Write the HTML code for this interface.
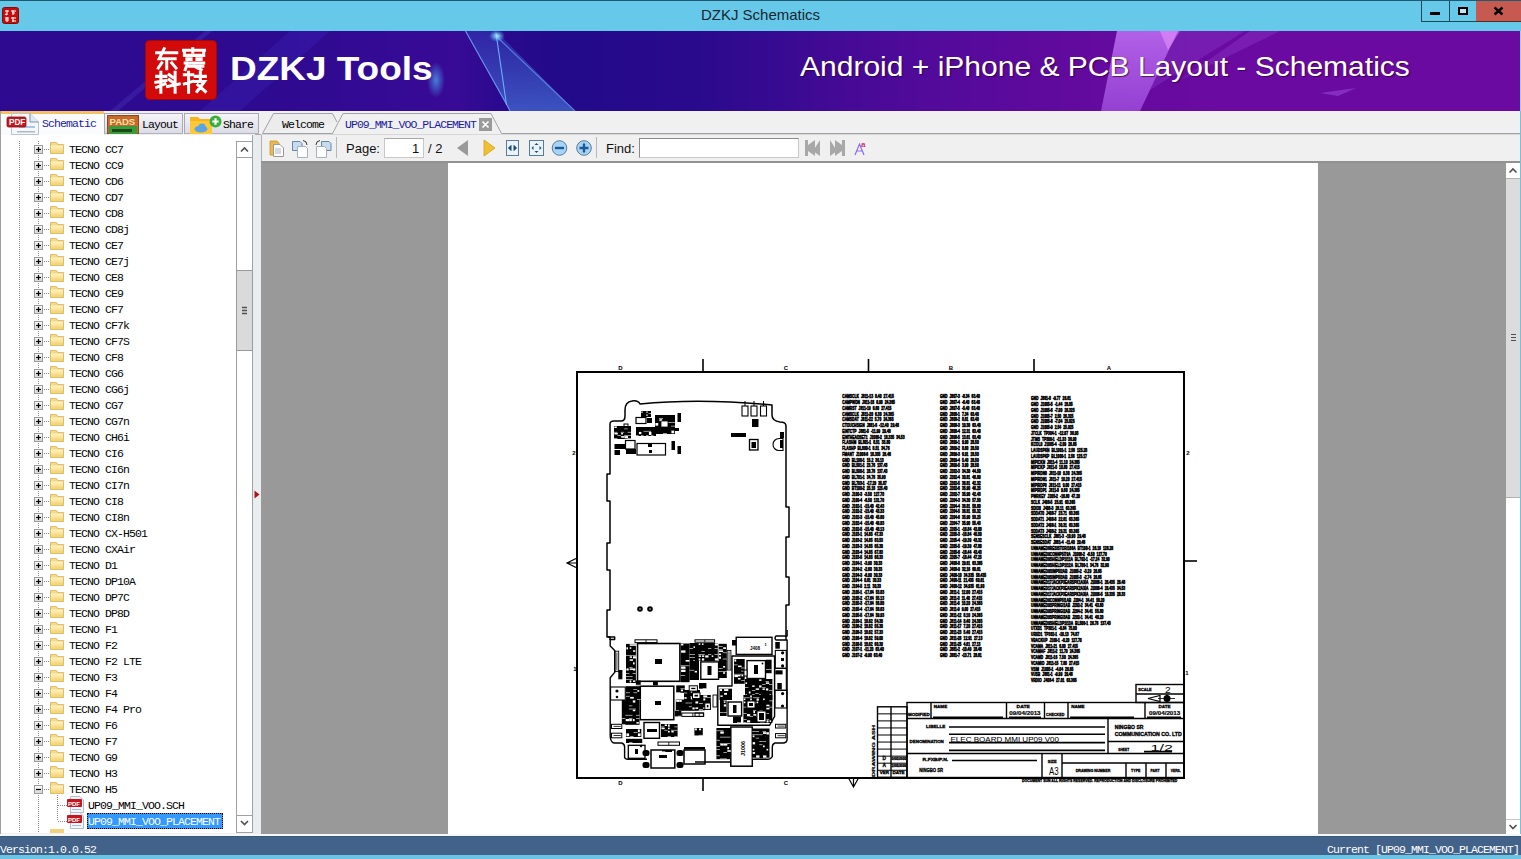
<!DOCTYPE html>
<html><head><meta charset="utf-8">
<style>
*{margin:0;padding:0;box-sizing:border-box}
html,body{width:1521px;height:859px;overflow:hidden;background:#f0f0f0;font-family:"Liberation Sans",sans-serif}
.a{position:absolute}
.mono{font-family:"Liberation Mono",monospace}
svg{position:absolute;overflow:visible}
</style></head><body>

<div class="a" style="left:0;top:0;width:1521px;height:31px;background:#66c9ea"></div>
<div class="a" style="left:0;top:0;width:1521px;height:1px;background:#1f5a70"></div>
<div class="a" id="ttl" style="left:0;top:6px;width:1521px;text-align:center;font-size:15px;color:#1a2630;line-height:18px">DZKJ Schematics</div>
<svg style="left:2px;top:7px" width="17" height="17" viewBox="0 0 17 17">
<rect x="0.5" y="0.5" width="16" height="16" rx="2" fill="#c40d0d" stroke="#8a0a0a"/>
<path d="M3 4h4M5 3v5M3 7l2 1M9 4h5M11 3v5M10 6h3M3 11h4M5 10v5M3 13h4M9 11h5M11 10v5M10 14h4" stroke="#fff" stroke-width="1.1" fill="none"/>
</svg>
<div class="a" style="left:1421px;top:1px;width:28px;height:21px;border:1px solid #1d4657;border-top:none;border-right:none"></div>
<div class="a" style="left:1449px;top:1px;width:27px;height:21px;border:1px solid #1d4657;border-top:none;border-right:none"></div>
<div class="a" style="left:1476px;top:1px;width:45px;height:21px;background:#c75a50;border-bottom:1px solid #5a2a22"></div>
<div class="a" style="left:1430px;top:12px;width:10px;height:3px;background:#000"></div>
<div class="a" style="left:1458px;top:7px;width:10px;height:8px;border:2px solid #000;background:#bfe6f3"></div>
<svg style="left:1493px;top:6px" width="11" height="10" viewBox="0 0 11 10"><path d="M1.5 1.5L9.5 8.5M9.5 1.5L1.5 8.5" stroke="#000" stroke-width="2.4"/></svg>
<div class="a" style="left:0;top:31px;width:1520px;height:80px;overflow:hidden;background:linear-gradient(90deg,#2e0a90 0%,#2e0a90 18%,#340a94 25%,#380a96 30%,#2a0a8e 33%,#220a8a 37%,#2a0a8c 46%,#360a92 50.7%,#460a96 56%,#520a9a 61%,#5a0a9c 66%,#640a9e 72%,#6a0aa0 80%,#6a0aa0 100%)">
<svg style="left:0;top:0" width="1520" height="80" viewBox="0 31 1520 80">
<defs>
<linearGradient id="gb" x1="0" y1="0" x2="0" y2="1"><stop offset="0" stop-color="#3040b8" stop-opacity="0.5"/><stop offset="1" stop-color="#4a80e0" stop-opacity="0.62"/></linearGradient>
<linearGradient id="gp" x1="0" y1="0" x2="0" y2="1"><stop offset="0" stop-color="#c070f4" stop-opacity="0.85"/><stop offset="1" stop-color="#a858e8" stop-opacity="0.7"/></linearGradient>
<radialGradient id="gl"><stop offset="0" stop-color="#4a9ae8" stop-opacity="0.8"/><stop offset="1" stop-color="#4a9ae8" stop-opacity="0"/></radialGradient>
<radialGradient id="gl2"><stop offset="0" stop-color="#a0f0ff" stop-opacity="1"/><stop offset="1" stop-color="#60c0ff" stop-opacity="0"/></radialGradient>
</defs>
<path d="M110 111L205 31H212L118 111Z" fill="#4a3ac0" opacity="0.35"/>
<path d="M200 111L290 31H330L240 111Z" fill="#3a2ac0" opacity="0.3"/>
<path d="M465.5 31H496L575 111H510Z" fill="url(#gb)"/>
<path d="M465.5 31L507.5 106L510 111" fill="none" stroke="#6a98f0" stroke-width="1.1"/>
<path d="M496 33L506.5 105" fill="none" stroke="#70b0f8" stroke-width="1.1"/>
<path d="M496 36L575 111" fill="none" stroke="#5a80e0" stroke-width="1.1"/>
<ellipse cx="497" cy="36" rx="8" ry="6" fill="url(#gl2)"/>
<ellipse cx="436" cy="80" rx="9" ry="18" fill="url(#gl)"/>
<path d="M1117 31H1178L1140 111H1101Z" fill="url(#gp)"/>
<path d="M1160 31H1180L1168 50Z" fill="#e890ff" opacity="0.6"/>
<path d="M1178 31H1245L1150 90L1140 111Z" fill="#9040d0" opacity="0.35"/>
<path d="M1250 31H1280L1180 80Z" fill="#9a4ad8" opacity="0.3"/>
<path d="M1320 93L1356 88L1338 96Z" fill="#a050e0" opacity="0.5"/>
</svg>
</div>
<div class="a" style="left:1520px;top:31px;width:1px;height:80px;background:#8fd6f0"></div>
<svg style="left:145px;top:40px" width="72" height="60" viewBox="0 0 72 60">
<rect x="0.5" y="0.5" width="71" height="59" rx="4" fill="#d20a0a" stroke="#a00808"/>
<g stroke="#fff" stroke-width="3.6" fill="none" stroke-linecap="square" transform="translate(36,30.5) scale(0.84) translate(-36,-31)">
<path d="M7 10H31M16 5L10 17H29M19 17V29M13 22L9 28M25 22L30 28"/>
<path d="M39 7H64M50 5V9M40 10V13H63V10M43 14H48M55 14H60M43 18H48M55 18H60M41 22H63M44 22L41 30M46 26H62M52 26L60 30"/>
<path d="M7 38H18M12 33V57M6 45L18 43M7 51L17 47M22 36L26 39M22 42L26 45M20 50L34 47M29 33V57"/>
<path d="M40 36H50M45 33V57M40 47L50 44M53 38H65M59 33V42M53 44H64L55 56M56 48L65 56"/>
</g></svg>
<div class="a" id="dzkj" style="left:229.5px;top:48px;transform:scaleX(1.087);font-size:34px;font-weight:bold;color:#fff;line-height:40px;white-space:nowrap;transform-origin:0 0">DZKJ Tools</div>
<div class="a" id="andr" style="left:800px;top:50px;transform:scaleX(1.0915);font-size:27.5px;color:#fff;line-height:34px;white-space:nowrap;transform-origin:0 0;text-shadow:1px 1px 1px rgba(40,0,60,0.7)">Android + iPhone &amp; PCB Layout - Schematics</div>
<div class="a" style="left:0;top:111px;width:1521px;height:725px;background:#f0f0f0"></div>
<div class="a" style="left:0;top:111px;width:1px;height:725px;background:#a0a0a0"></div>
<div class="a" style="left:1520px;top:111px;width:1px;height:725px;background:#b8d8e8"></div>
<div class="a" style="left:1px;top:111px;width:103px;height:24px;background:#fafbfd;border-top:3px solid #f5c15e"></div>
<div class="a" style="left:104px;top:113px;width:79px;height:21px;background:linear-gradient(#f4f4f8,#dcdce6);border:1px solid #a8a8b8;border-bottom-color:#b0b0c0"></div>
<div class="a" style="left:184px;top:113px;width:75px;height:21px;background:linear-gradient(#f4f4f8,#dcdce6);border:1px solid #a8a8b8;border-bottom-color:#b0b0c0"></div>
<svg style="left:6px;top:113px" width="34" height="22" viewBox="0 0 34 22">
<path d="M5.5 0.5H24L32.5 9V21.5H5.5Z" fill="#f4f8fc" stroke="#b8c4d0"/>
<path d="M24 0.5V9H32.5" fill="#e0e8f0" stroke="#8090a0"/>
<rect x="13" y="13" width="16" height="2" fill="#a8c8e8"/><rect x="11" y="18" width="18" height="1.5" fill="#b0b8c8"/>
<rect x="1" y="4" width="19" height="10" rx="1.5" fill="#c8141c" stroke="#901010" stroke-width="0.8"/>
<text x="3" y="12.3" font-family="Liberation Sans" font-weight="bold" font-size="8.2" fill="#fff">PDF</text>
</svg>
<div class="a mono" style="left:42px;top:116.5px;font-size:11.5px;letter-spacing:-0.9px;color:#1a1aa0;line-height:14px;white-space:pre">Schematic</div>
<svg style="left:107px;top:115px" width="32" height="19" viewBox="0 0 32 19">
<rect x="0.5" y="0.5" width="31" height="18" fill="#c8682a" stroke="#8a4a20"/>
<rect x="2" y="11" width="28" height="8" fill="#3a9a3a"/>
<rect x="5" y="14" width="20" height="3" fill="#1a4a1a"/>
<text x="2.5" y="10" font-family="Liberation Sans" font-weight="bold" font-size="9.5" fill="#fbe6a8">PADS</text>
</svg>
<div class="a mono" style="left:142px;top:118px;font-size:11.5px;letter-spacing:-0.9px;color:#000;line-height:14px;white-space:pre">Layout</div>
<svg style="left:189px;top:114px" width="34" height="20" viewBox="0 0 34 20">
<path d="M1 3H9L11 5H23V20H1Z" fill="#f8b418"/>
<path d="M1 7H23V20H1Z" fill="#fcc83a"/>
<ellipse cx="12" cy="15" rx="6.5" ry="3.5" fill="#5aa4e4"/><ellipse cx="13" cy="12.5" rx="3.5" ry="3" fill="#5aa4e4"/>
<circle cx="26.5" cy="7.5" r="6" fill="#3aae3a"/>
<path d="M26.5 4.3V10.7M23.3 7.5H29.7" stroke="#fff" stroke-width="2.2"/>
</svg>
<div class="a mono" style="left:223px;top:118px;font-size:11.5px;letter-spacing:-0.9px;color:#000;line-height:14px;white-space:pre">Share</div>
<svg style="left:255px;top:110px" width="1266" height="26" viewBox="0 0 1266 26">
<path d="M0 24.5H1266" stroke="#a8a8a8"/>
<path d="M7.5 23.5L18.5 3.5H77.5L82 12" fill="#ececec" stroke="#a0a4a8"/>
<path d="M7.5 23.5H80" stroke="#a0a4a8"/>
<path d="M77 24.5L88 3.5H236L246.5 23.5H1266" fill="#f0f0f0" stroke="#a0a4a8"/>
</svg>
<div class="a mono" style="left:282px;top:118px;font-size:11.5px;letter-spacing:-0.9px;color:#000;line-height:14px;white-space:pre">Welcome</div>
<div class="a mono" style="left:345px;top:118px;font-size:11.5px;letter-spacing:-0.95px;color:#1a1aa0;line-height:14px;white-space:pre">UP09_MMI_VOO_PLACEMENT</div>
<svg style="left:479px;top:118px" width="13" height="13" viewBox="0 0 13 13"><rect width="13" height="13" fill="#9a9a9a"/><path d="M3.5 3.5L9.5 9.5M9.5 3.5L3.5 9.5" stroke="#fff" stroke-width="1.7"/></svg>
<div class="a" style="left:1px;top:135px;width:252px;height:698px;background:#fff"></div>
<div class="a" style="left:252px;top:135px;width:1px;height:698px;background:#a0a0a0"></div>
<div class="a" style="left:253px;top:135px;width:8px;height:700px;background:#e9edf0"></div>
<svg style="left:0;top:135px" width="236" height="698" viewBox="0 135 236 698">
<defs><linearGradient id="bxg" x1="0" y1="0" x2="0" y2="1"><stop offset="0" stop-color="#fafafa"/><stop offset="1" stop-color="#d8d8d8"/></linearGradient><linearGradient id="fdg" x1="0" y1="0" x2="0" y2="1"><stop offset="0" stop-color="#f6dc90"/><stop offset="1" stop-color="#eec060"/></linearGradient><linearGradient id="ffg" x1="0" y1="0" x2="0" y2="1"><stop offset="0" stop-color="#fff4c4"/><stop offset="1" stop-color="#f4d070"/></linearGradient></defs>
<path d="M19.5 141V833M38.5 141V833" stroke="#8a8a8a" stroke-dasharray="1 1"/>
<path d="M44 149.5H50" stroke="#8a8a8a" stroke-dasharray="1 1"/>
<rect x="34.5" y="145.5" width="8" height="8" fill="url(#bxg)" stroke="#9a9a9a"/>
<path d="M36 149.5H41" stroke="#000" stroke-width="1.2"/>
<path d="M38.5 147V152" stroke="#000" stroke-width="1.2"/>
<path d="M50.5 142.5H56.5l1.5 2H63.5V153.5H50.5Z" fill="url(#fdg)" stroke="#dcb860" stroke-width="0.9"/>
<path d="M51 145.5H63V153H51Z" fill="url(#ffg)"/>
<path d="M44 165.5H50" stroke="#8a8a8a" stroke-dasharray="1 1"/>
<rect x="34.5" y="161.5" width="8" height="8" fill="url(#bxg)" stroke="#9a9a9a"/>
<path d="M36 165.5H41" stroke="#000" stroke-width="1.2"/>
<path d="M38.5 163V168" stroke="#000" stroke-width="1.2"/>
<path d="M50.5 158.5H56.5l1.5 2H63.5V169.5H50.5Z" fill="url(#fdg)" stroke="#dcb860" stroke-width="0.9"/>
<path d="M51 161.5H63V169H51Z" fill="url(#ffg)"/>
<path d="M44 181.5H50" stroke="#8a8a8a" stroke-dasharray="1 1"/>
<rect x="34.5" y="177.5" width="8" height="8" fill="url(#bxg)" stroke="#9a9a9a"/>
<path d="M36 181.5H41" stroke="#000" stroke-width="1.2"/>
<path d="M38.5 179V184" stroke="#000" stroke-width="1.2"/>
<path d="M50.5 174.5H56.5l1.5 2H63.5V185.5H50.5Z" fill="url(#fdg)" stroke="#dcb860" stroke-width="0.9"/>
<path d="M51 177.5H63V185H51Z" fill="url(#ffg)"/>
<path d="M44 197.5H50" stroke="#8a8a8a" stroke-dasharray="1 1"/>
<rect x="34.5" y="193.5" width="8" height="8" fill="url(#bxg)" stroke="#9a9a9a"/>
<path d="M36 197.5H41" stroke="#000" stroke-width="1.2"/>
<path d="M38.5 195V200" stroke="#000" stroke-width="1.2"/>
<path d="M50.5 190.5H56.5l1.5 2H63.5V201.5H50.5Z" fill="url(#fdg)" stroke="#dcb860" stroke-width="0.9"/>
<path d="M51 193.5H63V201H51Z" fill="url(#ffg)"/>
<path d="M44 213.5H50" stroke="#8a8a8a" stroke-dasharray="1 1"/>
<rect x="34.5" y="209.5" width="8" height="8" fill="url(#bxg)" stroke="#9a9a9a"/>
<path d="M36 213.5H41" stroke="#000" stroke-width="1.2"/>
<path d="M38.5 211V216" stroke="#000" stroke-width="1.2"/>
<path d="M50.5 206.5H56.5l1.5 2H63.5V217.5H50.5Z" fill="url(#fdg)" stroke="#dcb860" stroke-width="0.9"/>
<path d="M51 209.5H63V217H51Z" fill="url(#ffg)"/>
<path d="M44 229.5H50" stroke="#8a8a8a" stroke-dasharray="1 1"/>
<rect x="34.5" y="225.5" width="8" height="8" fill="url(#bxg)" stroke="#9a9a9a"/>
<path d="M36 229.5H41" stroke="#000" stroke-width="1.2"/>
<path d="M38.5 227V232" stroke="#000" stroke-width="1.2"/>
<path d="M50.5 222.5H56.5l1.5 2H63.5V233.5H50.5Z" fill="url(#fdg)" stroke="#dcb860" stroke-width="0.9"/>
<path d="M51 225.5H63V233H51Z" fill="url(#ffg)"/>
<path d="M44 245.5H50" stroke="#8a8a8a" stroke-dasharray="1 1"/>
<rect x="34.5" y="241.5" width="8" height="8" fill="url(#bxg)" stroke="#9a9a9a"/>
<path d="M36 245.5H41" stroke="#000" stroke-width="1.2"/>
<path d="M38.5 243V248" stroke="#000" stroke-width="1.2"/>
<path d="M50.5 238.5H56.5l1.5 2H63.5V249.5H50.5Z" fill="url(#fdg)" stroke="#dcb860" stroke-width="0.9"/>
<path d="M51 241.5H63V249H51Z" fill="url(#ffg)"/>
<path d="M44 261.5H50" stroke="#8a8a8a" stroke-dasharray="1 1"/>
<rect x="34.5" y="257.5" width="8" height="8" fill="url(#bxg)" stroke="#9a9a9a"/>
<path d="M36 261.5H41" stroke="#000" stroke-width="1.2"/>
<path d="M38.5 259V264" stroke="#000" stroke-width="1.2"/>
<path d="M50.5 254.5H56.5l1.5 2H63.5V265.5H50.5Z" fill="url(#fdg)" stroke="#dcb860" stroke-width="0.9"/>
<path d="M51 257.5H63V265H51Z" fill="url(#ffg)"/>
<path d="M44 277.5H50" stroke="#8a8a8a" stroke-dasharray="1 1"/>
<rect x="34.5" y="273.5" width="8" height="8" fill="url(#bxg)" stroke="#9a9a9a"/>
<path d="M36 277.5H41" stroke="#000" stroke-width="1.2"/>
<path d="M38.5 275V280" stroke="#000" stroke-width="1.2"/>
<path d="M50.5 270.5H56.5l1.5 2H63.5V281.5H50.5Z" fill="url(#fdg)" stroke="#dcb860" stroke-width="0.9"/>
<path d="M51 273.5H63V281H51Z" fill="url(#ffg)"/>
<path d="M44 293.5H50" stroke="#8a8a8a" stroke-dasharray="1 1"/>
<rect x="34.5" y="289.5" width="8" height="8" fill="url(#bxg)" stroke="#9a9a9a"/>
<path d="M36 293.5H41" stroke="#000" stroke-width="1.2"/>
<path d="M38.5 291V296" stroke="#000" stroke-width="1.2"/>
<path d="M50.5 286.5H56.5l1.5 2H63.5V297.5H50.5Z" fill="url(#fdg)" stroke="#dcb860" stroke-width="0.9"/>
<path d="M51 289.5H63V297H51Z" fill="url(#ffg)"/>
<path d="M44 309.5H50" stroke="#8a8a8a" stroke-dasharray="1 1"/>
<rect x="34.5" y="305.5" width="8" height="8" fill="url(#bxg)" stroke="#9a9a9a"/>
<path d="M36 309.5H41" stroke="#000" stroke-width="1.2"/>
<path d="M38.5 307V312" stroke="#000" stroke-width="1.2"/>
<path d="M50.5 302.5H56.5l1.5 2H63.5V313.5H50.5Z" fill="url(#fdg)" stroke="#dcb860" stroke-width="0.9"/>
<path d="M51 305.5H63V313H51Z" fill="url(#ffg)"/>
<path d="M44 325.5H50" stroke="#8a8a8a" stroke-dasharray="1 1"/>
<rect x="34.5" y="321.5" width="8" height="8" fill="url(#bxg)" stroke="#9a9a9a"/>
<path d="M36 325.5H41" stroke="#000" stroke-width="1.2"/>
<path d="M38.5 323V328" stroke="#000" stroke-width="1.2"/>
<path d="M50.5 318.5H56.5l1.5 2H63.5V329.5H50.5Z" fill="url(#fdg)" stroke="#dcb860" stroke-width="0.9"/>
<path d="M51 321.5H63V329H51Z" fill="url(#ffg)"/>
<path d="M44 341.5H50" stroke="#8a8a8a" stroke-dasharray="1 1"/>
<rect x="34.5" y="337.5" width="8" height="8" fill="url(#bxg)" stroke="#9a9a9a"/>
<path d="M36 341.5H41" stroke="#000" stroke-width="1.2"/>
<path d="M38.5 339V344" stroke="#000" stroke-width="1.2"/>
<path d="M50.5 334.5H56.5l1.5 2H63.5V345.5H50.5Z" fill="url(#fdg)" stroke="#dcb860" stroke-width="0.9"/>
<path d="M51 337.5H63V345H51Z" fill="url(#ffg)"/>
<path d="M44 357.5H50" stroke="#8a8a8a" stroke-dasharray="1 1"/>
<rect x="34.5" y="353.5" width="8" height="8" fill="url(#bxg)" stroke="#9a9a9a"/>
<path d="M36 357.5H41" stroke="#000" stroke-width="1.2"/>
<path d="M38.5 355V360" stroke="#000" stroke-width="1.2"/>
<path d="M50.5 350.5H56.5l1.5 2H63.5V361.5H50.5Z" fill="url(#fdg)" stroke="#dcb860" stroke-width="0.9"/>
<path d="M51 353.5H63V361H51Z" fill="url(#ffg)"/>
<path d="M44 373.5H50" stroke="#8a8a8a" stroke-dasharray="1 1"/>
<rect x="34.5" y="369.5" width="8" height="8" fill="url(#bxg)" stroke="#9a9a9a"/>
<path d="M36 373.5H41" stroke="#000" stroke-width="1.2"/>
<path d="M38.5 371V376" stroke="#000" stroke-width="1.2"/>
<path d="M50.5 366.5H56.5l1.5 2H63.5V377.5H50.5Z" fill="url(#fdg)" stroke="#dcb860" stroke-width="0.9"/>
<path d="M51 369.5H63V377H51Z" fill="url(#ffg)"/>
<path d="M44 389.5H50" stroke="#8a8a8a" stroke-dasharray="1 1"/>
<rect x="34.5" y="385.5" width="8" height="8" fill="url(#bxg)" stroke="#9a9a9a"/>
<path d="M36 389.5H41" stroke="#000" stroke-width="1.2"/>
<path d="M38.5 387V392" stroke="#000" stroke-width="1.2"/>
<path d="M50.5 382.5H56.5l1.5 2H63.5V393.5H50.5Z" fill="url(#fdg)" stroke="#dcb860" stroke-width="0.9"/>
<path d="M51 385.5H63V393H51Z" fill="url(#ffg)"/>
<path d="M44 405.5H50" stroke="#8a8a8a" stroke-dasharray="1 1"/>
<rect x="34.5" y="401.5" width="8" height="8" fill="url(#bxg)" stroke="#9a9a9a"/>
<path d="M36 405.5H41" stroke="#000" stroke-width="1.2"/>
<path d="M38.5 403V408" stroke="#000" stroke-width="1.2"/>
<path d="M50.5 398.5H56.5l1.5 2H63.5V409.5H50.5Z" fill="url(#fdg)" stroke="#dcb860" stroke-width="0.9"/>
<path d="M51 401.5H63V409H51Z" fill="url(#ffg)"/>
<path d="M44 421.5H50" stroke="#8a8a8a" stroke-dasharray="1 1"/>
<rect x="34.5" y="417.5" width="8" height="8" fill="url(#bxg)" stroke="#9a9a9a"/>
<path d="M36 421.5H41" stroke="#000" stroke-width="1.2"/>
<path d="M38.5 419V424" stroke="#000" stroke-width="1.2"/>
<path d="M50.5 414.5H56.5l1.5 2H63.5V425.5H50.5Z" fill="url(#fdg)" stroke="#dcb860" stroke-width="0.9"/>
<path d="M51 417.5H63V425H51Z" fill="url(#ffg)"/>
<path d="M44 437.5H50" stroke="#8a8a8a" stroke-dasharray="1 1"/>
<rect x="34.5" y="433.5" width="8" height="8" fill="url(#bxg)" stroke="#9a9a9a"/>
<path d="M36 437.5H41" stroke="#000" stroke-width="1.2"/>
<path d="M38.5 435V440" stroke="#000" stroke-width="1.2"/>
<path d="M50.5 430.5H56.5l1.5 2H63.5V441.5H50.5Z" fill="url(#fdg)" stroke="#dcb860" stroke-width="0.9"/>
<path d="M51 433.5H63V441H51Z" fill="url(#ffg)"/>
<path d="M44 453.5H50" stroke="#8a8a8a" stroke-dasharray="1 1"/>
<rect x="34.5" y="449.5" width="8" height="8" fill="url(#bxg)" stroke="#9a9a9a"/>
<path d="M36 453.5H41" stroke="#000" stroke-width="1.2"/>
<path d="M38.5 451V456" stroke="#000" stroke-width="1.2"/>
<path d="M50.5 446.5H56.5l1.5 2H63.5V457.5H50.5Z" fill="url(#fdg)" stroke="#dcb860" stroke-width="0.9"/>
<path d="M51 449.5H63V457H51Z" fill="url(#ffg)"/>
<path d="M44 469.5H50" stroke="#8a8a8a" stroke-dasharray="1 1"/>
<rect x="34.5" y="465.5" width="8" height="8" fill="url(#bxg)" stroke="#9a9a9a"/>
<path d="M36 469.5H41" stroke="#000" stroke-width="1.2"/>
<path d="M38.5 467V472" stroke="#000" stroke-width="1.2"/>
<path d="M50.5 462.5H56.5l1.5 2H63.5V473.5H50.5Z" fill="url(#fdg)" stroke="#dcb860" stroke-width="0.9"/>
<path d="M51 465.5H63V473H51Z" fill="url(#ffg)"/>
<path d="M44 485.5H50" stroke="#8a8a8a" stroke-dasharray="1 1"/>
<rect x="34.5" y="481.5" width="8" height="8" fill="url(#bxg)" stroke="#9a9a9a"/>
<path d="M36 485.5H41" stroke="#000" stroke-width="1.2"/>
<path d="M38.5 483V488" stroke="#000" stroke-width="1.2"/>
<path d="M50.5 478.5H56.5l1.5 2H63.5V489.5H50.5Z" fill="url(#fdg)" stroke="#dcb860" stroke-width="0.9"/>
<path d="M51 481.5H63V489H51Z" fill="url(#ffg)"/>
<path d="M44 501.5H50" stroke="#8a8a8a" stroke-dasharray="1 1"/>
<rect x="34.5" y="497.5" width="8" height="8" fill="url(#bxg)" stroke="#9a9a9a"/>
<path d="M36 501.5H41" stroke="#000" stroke-width="1.2"/>
<path d="M38.5 499V504" stroke="#000" stroke-width="1.2"/>
<path d="M50.5 494.5H56.5l1.5 2H63.5V505.5H50.5Z" fill="url(#fdg)" stroke="#dcb860" stroke-width="0.9"/>
<path d="M51 497.5H63V505H51Z" fill="url(#ffg)"/>
<path d="M44 517.5H50" stroke="#8a8a8a" stroke-dasharray="1 1"/>
<rect x="34.5" y="513.5" width="8" height="8" fill="url(#bxg)" stroke="#9a9a9a"/>
<path d="M36 517.5H41" stroke="#000" stroke-width="1.2"/>
<path d="M38.5 515V520" stroke="#000" stroke-width="1.2"/>
<path d="M50.5 510.5H56.5l1.5 2H63.5V521.5H50.5Z" fill="url(#fdg)" stroke="#dcb860" stroke-width="0.9"/>
<path d="M51 513.5H63V521H51Z" fill="url(#ffg)"/>
<path d="M44 533.5H50" stroke="#8a8a8a" stroke-dasharray="1 1"/>
<rect x="34.5" y="529.5" width="8" height="8" fill="url(#bxg)" stroke="#9a9a9a"/>
<path d="M36 533.5H41" stroke="#000" stroke-width="1.2"/>
<path d="M38.5 531V536" stroke="#000" stroke-width="1.2"/>
<path d="M50.5 526.5H56.5l1.5 2H63.5V537.5H50.5Z" fill="url(#fdg)" stroke="#dcb860" stroke-width="0.9"/>
<path d="M51 529.5H63V537H51Z" fill="url(#ffg)"/>
<path d="M44 549.5H50" stroke="#8a8a8a" stroke-dasharray="1 1"/>
<rect x="34.5" y="545.5" width="8" height="8" fill="url(#bxg)" stroke="#9a9a9a"/>
<path d="M36 549.5H41" stroke="#000" stroke-width="1.2"/>
<path d="M38.5 547V552" stroke="#000" stroke-width="1.2"/>
<path d="M50.5 542.5H56.5l1.5 2H63.5V553.5H50.5Z" fill="url(#fdg)" stroke="#dcb860" stroke-width="0.9"/>
<path d="M51 545.5H63V553H51Z" fill="url(#ffg)"/>
<path d="M44 565.5H50" stroke="#8a8a8a" stroke-dasharray="1 1"/>
<rect x="34.5" y="561.5" width="8" height="8" fill="url(#bxg)" stroke="#9a9a9a"/>
<path d="M36 565.5H41" stroke="#000" stroke-width="1.2"/>
<path d="M38.5 563V568" stroke="#000" stroke-width="1.2"/>
<path d="M50.5 558.5H56.5l1.5 2H63.5V569.5H50.5Z" fill="url(#fdg)" stroke="#dcb860" stroke-width="0.9"/>
<path d="M51 561.5H63V569H51Z" fill="url(#ffg)"/>
<path d="M44 581.5H50" stroke="#8a8a8a" stroke-dasharray="1 1"/>
<rect x="34.5" y="577.5" width="8" height="8" fill="url(#bxg)" stroke="#9a9a9a"/>
<path d="M36 581.5H41" stroke="#000" stroke-width="1.2"/>
<path d="M38.5 579V584" stroke="#000" stroke-width="1.2"/>
<path d="M50.5 574.5H56.5l1.5 2H63.5V585.5H50.5Z" fill="url(#fdg)" stroke="#dcb860" stroke-width="0.9"/>
<path d="M51 577.5H63V585H51Z" fill="url(#ffg)"/>
<path d="M44 597.5H50" stroke="#8a8a8a" stroke-dasharray="1 1"/>
<rect x="34.5" y="593.5" width="8" height="8" fill="url(#bxg)" stroke="#9a9a9a"/>
<path d="M36 597.5H41" stroke="#000" stroke-width="1.2"/>
<path d="M38.5 595V600" stroke="#000" stroke-width="1.2"/>
<path d="M50.5 590.5H56.5l1.5 2H63.5V601.5H50.5Z" fill="url(#fdg)" stroke="#dcb860" stroke-width="0.9"/>
<path d="M51 593.5H63V601H51Z" fill="url(#ffg)"/>
<path d="M44 613.5H50" stroke="#8a8a8a" stroke-dasharray="1 1"/>
<rect x="34.5" y="609.5" width="8" height="8" fill="url(#bxg)" stroke="#9a9a9a"/>
<path d="M36 613.5H41" stroke="#000" stroke-width="1.2"/>
<path d="M38.5 611V616" stroke="#000" stroke-width="1.2"/>
<path d="M50.5 606.5H56.5l1.5 2H63.5V617.5H50.5Z" fill="url(#fdg)" stroke="#dcb860" stroke-width="0.9"/>
<path d="M51 609.5H63V617H51Z" fill="url(#ffg)"/>
<path d="M44 629.5H50" stroke="#8a8a8a" stroke-dasharray="1 1"/>
<rect x="34.5" y="625.5" width="8" height="8" fill="url(#bxg)" stroke="#9a9a9a"/>
<path d="M36 629.5H41" stroke="#000" stroke-width="1.2"/>
<path d="M38.5 627V632" stroke="#000" stroke-width="1.2"/>
<path d="M50.5 622.5H56.5l1.5 2H63.5V633.5H50.5Z" fill="url(#fdg)" stroke="#dcb860" stroke-width="0.9"/>
<path d="M51 625.5H63V633H51Z" fill="url(#ffg)"/>
<path d="M44 645.5H50" stroke="#8a8a8a" stroke-dasharray="1 1"/>
<rect x="34.5" y="641.5" width="8" height="8" fill="url(#bxg)" stroke="#9a9a9a"/>
<path d="M36 645.5H41" stroke="#000" stroke-width="1.2"/>
<path d="M38.5 643V648" stroke="#000" stroke-width="1.2"/>
<path d="M50.5 638.5H56.5l1.5 2H63.5V649.5H50.5Z" fill="url(#fdg)" stroke="#dcb860" stroke-width="0.9"/>
<path d="M51 641.5H63V649H51Z" fill="url(#ffg)"/>
<path d="M44 661.5H50" stroke="#8a8a8a" stroke-dasharray="1 1"/>
<rect x="34.5" y="657.5" width="8" height="8" fill="url(#bxg)" stroke="#9a9a9a"/>
<path d="M36 661.5H41" stroke="#000" stroke-width="1.2"/>
<path d="M38.5 659V664" stroke="#000" stroke-width="1.2"/>
<path d="M50.5 654.5H56.5l1.5 2H63.5V665.5H50.5Z" fill="url(#fdg)" stroke="#dcb860" stroke-width="0.9"/>
<path d="M51 657.5H63V665H51Z" fill="url(#ffg)"/>
<path d="M44 677.5H50" stroke="#8a8a8a" stroke-dasharray="1 1"/>
<rect x="34.5" y="673.5" width="8" height="8" fill="url(#bxg)" stroke="#9a9a9a"/>
<path d="M36 677.5H41" stroke="#000" stroke-width="1.2"/>
<path d="M38.5 675V680" stroke="#000" stroke-width="1.2"/>
<path d="M50.5 670.5H56.5l1.5 2H63.5V681.5H50.5Z" fill="url(#fdg)" stroke="#dcb860" stroke-width="0.9"/>
<path d="M51 673.5H63V681H51Z" fill="url(#ffg)"/>
<path d="M44 693.5H50" stroke="#8a8a8a" stroke-dasharray="1 1"/>
<rect x="34.5" y="689.5" width="8" height="8" fill="url(#bxg)" stroke="#9a9a9a"/>
<path d="M36 693.5H41" stroke="#000" stroke-width="1.2"/>
<path d="M38.5 691V696" stroke="#000" stroke-width="1.2"/>
<path d="M50.5 686.5H56.5l1.5 2H63.5V697.5H50.5Z" fill="url(#fdg)" stroke="#dcb860" stroke-width="0.9"/>
<path d="M51 689.5H63V697H51Z" fill="url(#ffg)"/>
<path d="M44 709.5H50" stroke="#8a8a8a" stroke-dasharray="1 1"/>
<rect x="34.5" y="705.5" width="8" height="8" fill="url(#bxg)" stroke="#9a9a9a"/>
<path d="M36 709.5H41" stroke="#000" stroke-width="1.2"/>
<path d="M38.5 707V712" stroke="#000" stroke-width="1.2"/>
<path d="M50.5 702.5H56.5l1.5 2H63.5V713.5H50.5Z" fill="url(#fdg)" stroke="#dcb860" stroke-width="0.9"/>
<path d="M51 705.5H63V713H51Z" fill="url(#ffg)"/>
<path d="M44 725.5H50" stroke="#8a8a8a" stroke-dasharray="1 1"/>
<rect x="34.5" y="721.5" width="8" height="8" fill="url(#bxg)" stroke="#9a9a9a"/>
<path d="M36 725.5H41" stroke="#000" stroke-width="1.2"/>
<path d="M38.5 723V728" stroke="#000" stroke-width="1.2"/>
<path d="M50.5 718.5H56.5l1.5 2H63.5V729.5H50.5Z" fill="url(#fdg)" stroke="#dcb860" stroke-width="0.9"/>
<path d="M51 721.5H63V729H51Z" fill="url(#ffg)"/>
<path d="M44 741.5H50" stroke="#8a8a8a" stroke-dasharray="1 1"/>
<rect x="34.5" y="737.5" width="8" height="8" fill="url(#bxg)" stroke="#9a9a9a"/>
<path d="M36 741.5H41" stroke="#000" stroke-width="1.2"/>
<path d="M38.5 739V744" stroke="#000" stroke-width="1.2"/>
<path d="M50.5 734.5H56.5l1.5 2H63.5V745.5H50.5Z" fill="url(#fdg)" stroke="#dcb860" stroke-width="0.9"/>
<path d="M51 737.5H63V745H51Z" fill="url(#ffg)"/>
<path d="M44 757.5H50" stroke="#8a8a8a" stroke-dasharray="1 1"/>
<rect x="34.5" y="753.5" width="8" height="8" fill="url(#bxg)" stroke="#9a9a9a"/>
<path d="M36 757.5H41" stroke="#000" stroke-width="1.2"/>
<path d="M38.5 755V760" stroke="#000" stroke-width="1.2"/>
<path d="M50.5 750.5H56.5l1.5 2H63.5V761.5H50.5Z" fill="url(#fdg)" stroke="#dcb860" stroke-width="0.9"/>
<path d="M51 753.5H63V761H51Z" fill="url(#ffg)"/>
<path d="M44 773.5H50" stroke="#8a8a8a" stroke-dasharray="1 1"/>
<rect x="34.5" y="769.5" width="8" height="8" fill="url(#bxg)" stroke="#9a9a9a"/>
<path d="M36 773.5H41" stroke="#000" stroke-width="1.2"/>
<path d="M38.5 771V776" stroke="#000" stroke-width="1.2"/>
<path d="M50.5 766.5H56.5l1.5 2H63.5V777.5H50.5Z" fill="url(#fdg)" stroke="#dcb860" stroke-width="0.9"/>
<path d="M51 769.5H63V777H51Z" fill="url(#ffg)"/>
<path d="M44 789.5H50" stroke="#8a8a8a" stroke-dasharray="1 1"/>
<rect x="34.5" y="785.5" width="8" height="8" fill="url(#bxg)" stroke="#9a9a9a"/>
<path d="M36 789.5H41" stroke="#000" stroke-width="1.2"/>
<path d="M50.5 782.5H56.5l1.5 2H63.5V793.5H50.5Z" fill="url(#fdg)" stroke="#dcb860" stroke-width="0.9"/>
<path d="M51 785.5H63V793H51Z" fill="url(#ffg)"/>
<path d="M57.5 795V821M58 805.5H68M58 821.5H68" stroke="#8a8a8a" stroke-dasharray="1 1"/>
<path d="M70.5 796.5H80l3.5 3.5V812.5H70.5Z" fill="#f2f6fa" stroke="#b0bcc8"/>
<rect x="67" y="799" width="15" height="8" rx="1" fill="#c8141c"/>
<text x="68" y="805.8" font-family="Liberation Sans" font-weight="bold" font-size="6" fill="#fff">PDF</text>
<rect x="72" y="809" width="9" height="1" fill="#9ac0e8"/>
<path d="M70.5 812.5H80l3.5 3.5V828.5H70.5Z" fill="#f2f6fa" stroke="#b0bcc8"/>
<rect x="67" y="815" width="15" height="8" rx="1" fill="#c8141c"/>
<text x="68" y="821.8" font-family="Liberation Sans" font-weight="bold" font-size="6" fill="#fff">PDF</text>
<rect x="72" y="825" width="9" height="1" fill="#9ac0e8"/>
</svg>
<div class="a mono" style="left:69px;top:143px;font-size:11.5px;letter-spacing:-0.9px;color:#000;line-height:14px;white-space:pre">TECNO CC7</div>
<div class="a mono" style="left:69px;top:159px;font-size:11.5px;letter-spacing:-0.9px;color:#000;line-height:14px;white-space:pre">TECNO CC9</div>
<div class="a mono" style="left:69px;top:175px;font-size:11.5px;letter-spacing:-0.9px;color:#000;line-height:14px;white-space:pre">TECNO CD6</div>
<div class="a mono" style="left:69px;top:191px;font-size:11.5px;letter-spacing:-0.9px;color:#000;line-height:14px;white-space:pre">TECNO CD7</div>
<div class="a mono" style="left:69px;top:207px;font-size:11.5px;letter-spacing:-0.9px;color:#000;line-height:14px;white-space:pre">TECNO CD8</div>
<div class="a mono" style="left:69px;top:223px;font-size:11.5px;letter-spacing:-0.9px;color:#000;line-height:14px;white-space:pre">TECNO CD8j</div>
<div class="a mono" style="left:69px;top:239px;font-size:11.5px;letter-spacing:-0.9px;color:#000;line-height:14px;white-space:pre">TECNO CE7</div>
<div class="a mono" style="left:69px;top:255px;font-size:11.5px;letter-spacing:-0.9px;color:#000;line-height:14px;white-space:pre">TECNO CE7j</div>
<div class="a mono" style="left:69px;top:271px;font-size:11.5px;letter-spacing:-0.9px;color:#000;line-height:14px;white-space:pre">TECNO CE8</div>
<div class="a mono" style="left:69px;top:287px;font-size:11.5px;letter-spacing:-0.9px;color:#000;line-height:14px;white-space:pre">TECNO CE9</div>
<div class="a mono" style="left:69px;top:303px;font-size:11.5px;letter-spacing:-0.9px;color:#000;line-height:14px;white-space:pre">TECNO CF7</div>
<div class="a mono" style="left:69px;top:319px;font-size:11.5px;letter-spacing:-0.9px;color:#000;line-height:14px;white-space:pre">TECNO CF7k</div>
<div class="a mono" style="left:69px;top:335px;font-size:11.5px;letter-spacing:-0.9px;color:#000;line-height:14px;white-space:pre">TECNO CF7S</div>
<div class="a mono" style="left:69px;top:351px;font-size:11.5px;letter-spacing:-0.9px;color:#000;line-height:14px;white-space:pre">TECNO CF8</div>
<div class="a mono" style="left:69px;top:367px;font-size:11.5px;letter-spacing:-0.9px;color:#000;line-height:14px;white-space:pre">TECNO CG6</div>
<div class="a mono" style="left:69px;top:383px;font-size:11.5px;letter-spacing:-0.9px;color:#000;line-height:14px;white-space:pre">TECNO CG6j</div>
<div class="a mono" style="left:69px;top:399px;font-size:11.5px;letter-spacing:-0.9px;color:#000;line-height:14px;white-space:pre">TECNO CG7</div>
<div class="a mono" style="left:69px;top:415px;font-size:11.5px;letter-spacing:-0.9px;color:#000;line-height:14px;white-space:pre">TECNO CG7n</div>
<div class="a mono" style="left:69px;top:431px;font-size:11.5px;letter-spacing:-0.9px;color:#000;line-height:14px;white-space:pre">TECNO CH6i</div>
<div class="a mono" style="left:69px;top:447px;font-size:11.5px;letter-spacing:-0.9px;color:#000;line-height:14px;white-space:pre">TECNO CI6</div>
<div class="a mono" style="left:69px;top:463px;font-size:11.5px;letter-spacing:-0.9px;color:#000;line-height:14px;white-space:pre">TECNO CI6n</div>
<div class="a mono" style="left:69px;top:479px;font-size:11.5px;letter-spacing:-0.9px;color:#000;line-height:14px;white-space:pre">TECNO CI7n</div>
<div class="a mono" style="left:69px;top:495px;font-size:11.5px;letter-spacing:-0.9px;color:#000;line-height:14px;white-space:pre">TECNO CI8</div>
<div class="a mono" style="left:69px;top:511px;font-size:11.5px;letter-spacing:-0.9px;color:#000;line-height:14px;white-space:pre">TECNO CI8n</div>
<div class="a mono" style="left:69px;top:527px;font-size:11.5px;letter-spacing:-0.9px;color:#000;line-height:14px;white-space:pre">TECNO CX-H501</div>
<div class="a mono" style="left:69px;top:543px;font-size:11.5px;letter-spacing:-0.9px;color:#000;line-height:14px;white-space:pre">TECNO CXAir</div>
<div class="a mono" style="left:69px;top:559px;font-size:11.5px;letter-spacing:-0.9px;color:#000;line-height:14px;white-space:pre">TECNO D1</div>
<div class="a mono" style="left:69px;top:575px;font-size:11.5px;letter-spacing:-0.9px;color:#000;line-height:14px;white-space:pre">TECNO DP10A</div>
<div class="a mono" style="left:69px;top:591px;font-size:11.5px;letter-spacing:-0.9px;color:#000;line-height:14px;white-space:pre">TECNO DP7C</div>
<div class="a mono" style="left:69px;top:607px;font-size:11.5px;letter-spacing:-0.9px;color:#000;line-height:14px;white-space:pre">TECNO DP8D</div>
<div class="a mono" style="left:69px;top:623px;font-size:11.5px;letter-spacing:-0.9px;color:#000;line-height:14px;white-space:pre">TECNO F1</div>
<div class="a mono" style="left:69px;top:639px;font-size:11.5px;letter-spacing:-0.9px;color:#000;line-height:14px;white-space:pre">TECNO F2</div>
<div class="a mono" style="left:69px;top:655px;font-size:11.5px;letter-spacing:-0.9px;color:#000;line-height:14px;white-space:pre">TECNO F2 LTE</div>
<div class="a mono" style="left:69px;top:671px;font-size:11.5px;letter-spacing:-0.9px;color:#000;line-height:14px;white-space:pre">TECNO F3</div>
<div class="a mono" style="left:69px;top:687px;font-size:11.5px;letter-spacing:-0.9px;color:#000;line-height:14px;white-space:pre">TECNO F4</div>
<div class="a mono" style="left:69px;top:703px;font-size:11.5px;letter-spacing:-0.9px;color:#000;line-height:14px;white-space:pre">TECNO F4 Pro</div>
<div class="a mono" style="left:69px;top:719px;font-size:11.5px;letter-spacing:-0.9px;color:#000;line-height:14px;white-space:pre">TECNO F6</div>
<div class="a mono" style="left:69px;top:735px;font-size:11.5px;letter-spacing:-0.9px;color:#000;line-height:14px;white-space:pre">TECNO F7</div>
<div class="a mono" style="left:69px;top:751px;font-size:11.5px;letter-spacing:-0.9px;color:#000;line-height:14px;white-space:pre">TECNO G9</div>
<div class="a mono" style="left:69px;top:767px;font-size:11.5px;letter-spacing:-0.9px;color:#000;line-height:14px;white-space:pre">TECNO H3</div>
<div class="a mono" style="left:69px;top:783px;font-size:11.5px;letter-spacing:-0.9px;color:#000;line-height:14px;white-space:pre">TECNO H5</div>
<div class="a mono" style="left:88px;top:799px;font-size:11.5px;letter-spacing:-0.9px;color:#000;line-height:14px;white-space:pre">UP09_MMI_VOO.SCH</div>
<div class="a" style="left:87px;top:813px;width:136px;height:16px;background:#3399ff;outline:1px dotted #000;outline-offset:-1px"></div>
<div class="a mono" style="left:88px;top:815px;font-size:11.5px;letter-spacing:-0.9px;color:#fff;line-height:14px;white-space:pre">UP09_MMI_VOO_PLACEMENT</div>
<div class="a" style="left:50px;top:829px;width:14px;height:4px;background:#f2d27a"></div>
<div class="a" style="left:236px;top:141px;width:17px;height:692px;background:#fff;border:1px solid #a0a0a0"></div>
<div class="a" style="left:236px;top:157px;width:17px;height:1px;background:#a0a0a0"></div>
<div class="a" style="left:236px;top:815px;width:17px;height:1px;background:#a0a0a0"></div>
<div class="a" style="left:236px;top:270px;width:17px;height:81px;background:#dadada;border:1px solid #9a9a9a"></div>
<svg style="left:236px;top:141px" width="17" height="692" viewBox="0 0 17 692"><path d="M5 10.5L8.5 7L12 10.5" stroke="#505050" stroke-width="1.6" fill="none"/><path d="M5 680L8.5 683.5L12 680" stroke="#505050" stroke-width="1.6" fill="none"/><path d="M6 166.5H11M6 169.5H11M6 172.5H11" stroke="#505050" stroke-width="1.3"/></svg>
<svg style="left:253px;top:489px" width="8" height="11" viewBox="0 0 8 11"><path d="M1.5 1.5L6.5 5.5L1.5 9.5Z" fill="#b0141a"/></svg>
<div class="a" style="left:261px;top:134px;width:1259px;height:27px;background:#f0f0f0;border-top:1px solid #d8d8d8"></div>
<div class="a" style="left:261px;top:135px;width:1px;height:26px;background:#b0b0b0"></div>
<div class="a" style="left:261px;top:161px;width:1259px;height:2px;background:#929292"></div>
<svg style="left:262px;top:135px" width="620" height="26" viewBox="262 135 620 26">
<g>
<path d="M270 141H277L279 143V155H270Z" fill="#eab850" stroke="#c89830" stroke-width="0.8"/>
<path d="M273.5 144.5H280L283.5 148V156.5H273.5Z" fill="#fff" stroke="#9a9a9a"/>
<path d="M275 149H281M275 151H281M275 153H281" stroke="#9aa0b0" stroke-width="0.8"/>
</g>
<g fill="#dfeaf6" stroke="#5a7a9a" stroke-width="0.9">
<path d="M292.5 141.5H300L302 143.5V150.5H292.5Z" fill="#c8dcf0"/>
<path d="M297.5 146.5H305.5L307.5 148.5V157.5H297.5Z" fill="#fff" stroke="#9aa8b8"/>
<path d="M303 140.5Q307 141 307 145" fill="none" stroke="#202020"/>
</g>
<g fill="#dfeaf6" stroke="#5a7a9a" stroke-width="0.9">
<path d="M321.5 141.5H329L331 143.5V150.5H321.5Z" fill="#c8dcf0"/>
<path d="M316.5 146.5H324.5L326.5 148.5V157.5H316.5Z" fill="#fff" stroke="#9aa8b8"/>
<path d="M320 140.5Q316 141 316 145" fill="none" stroke="#202020"/>
</g>
<path d="M336.5 137V158" stroke="#b8b8b8"/>
<path d="M596.5 137V158" stroke="#b8b8b8"/>
<path d="M468 140V156L457 148Z" fill="#9a9a9a"/>
<path d="M484 140V156L495 148Z" fill="#f0c030" stroke="#d0a020" stroke-width="0.8"/>
<rect x="506.5" y="140.5" width="12" height="15" fill="#eaf2fa" stroke="#5a7a9a"/>
<path d="M508.5 148L511 145.5V150.5ZM516.5 148L514 145.5V150.5Z" fill="#1a4a7a" stroke="#1a4a7a"/>
<rect x="529.5" y="140.5" width="14" height="15" fill="#eaf2fa" stroke="#5a7a9a"/>
<path d="M536.5 143L534.5 145H538.5ZM536.5 153L534.5 151H538.5ZM531.5 148L533.5 146V150ZM541.5 148L539.5 146V150Z" fill="#1a4a7a"/>
<circle cx="559.5" cy="148" r="7.3" fill="#a8d4f4" stroke="#5a7a9a"/>
<path d="M555 148H564" stroke="#1a5a9a" stroke-width="2.4"/>
<circle cx="584" cy="148" r="7.3" fill="#a8d4f4" stroke="#5a7a9a"/>
<path d="M579.5 148H588.5M584 143.5V152.5" stroke="#1a5a9a" stroke-width="2.4"/>
<path d="M805 140H808V145L815 140V156L808 151V156H805Z" fill="#a8a8a8"/>
<path d="M820 140V156L813 151Z" fill="#a8a8a8"/>
<path d="M845 140H842V145L835 140V156L842 151V156H845Z" fill="#a8a8a8"/>
<path d="M830 140V156L837 151Z" fill="#a8a8a8"/>
<path d="M855 155L859.5 144L864 155M857 151H862" stroke="#8a6af0" stroke-width="1.2" fill="none"/>
<text x="861" y="147" font-family="Liberation Sans" font-size="8" font-weight="bold" fill="#d0307a">a</text>
</svg>
<div class="a" style="left:346px;top:141px;font-size:13px;color:#111;line-height:16px">Page:</div>
<div class="a" style="left:384px;top:138px;width:40px;height:20px;background:#fff;border:1px solid #c8c8c8;border-top-color:#a8a8a8"></div>
<div class="a" style="left:412px;top:141px;font-size:13px;color:#111;line-height:16px">1</div>
<div class="a" style="left:428px;top:141px;font-size:13px;color:#111;line-height:16px">/ 2</div>
<div class="a" style="left:606px;top:140.5px;font-size:13px;color:#111;line-height:16px">Find:</div>
<div class="a" style="left:639px;top:138px;width:160px;height:20px;background:#fff;border:1px solid #c8c8c8;border-top-color:#8a8a8a;border-left-color:#8a8a8a"></div>
<div class="a" style="left:261px;top:163px;width:1245px;height:671px;background:#999999"></div>
<div class="a" style="left:448px;top:163px;width:870px;height:671px;background:#fff"></div>
<div class="a" style="left:1506px;top:163px;width:14px;height:672px;background:#fff"></div>
<div class="a" style="left:1506px;top:178px;width:14px;height:320px;background:#dcdcdc;border-top:1px solid #b0b0b0;border-bottom:1px solid #b0b0b0"></div>
<svg style="left:1506px;top:161px" width="14" height="674" viewBox="0 0 14 674"><path d="M3.5 11.5L7 8L10.5 11.5" stroke="#505050" stroke-width="1.6" fill="none"/><path d="M3.5 664L7 667.5L10.5 664" stroke="#505050" stroke-width="1.6" fill="none"/><path d="M5 173.5H10M5 176.5H10M5 179.5H10" stroke="#505050" stroke-width="1.2"/></svg>
<div class="a" style="left:1506px;top:819px;width:14px;height:1px;background:#c8c8c8"></div>
<div class="a" style="left:1520px;top:111px;width:1px;height:748px;background:#6cc4e4"></div>
<div class="a" style="left:0;top:834px;width:1521px;height:2px;background:#f4f8fc"></div>
<div class="a" style="left:0;top:836px;width:1521px;height:19px;background:#42628a;border-top:1px solid #3a5878"></div>
<div class="a" style="left:0;top:855px;width:1521px;height:4px;background:#6cc4e4"></div>
<div class="a mono" style="left:0;top:843px;font-size:11.5px;letter-spacing:-0.9px;color:#fff;line-height:14px;white-space:pre">Version:1.0.0.52</div>
<div class="a mono" id="cur" style="left:1327px;top:843px;font-size:11.5px;letter-spacing:-0.9px;color:#fff;line-height:14px;white-space:pre">Current [UP09_MMI_VOO_PLACEMENT]</div>
<svg style="left:448px;top:162px" width="870" height="672" viewBox="448 162 870 672">
<g fill="none" stroke="#000" stroke-width="2">
<rect x="577" y="372" width="607" height="406"/>
</g>
<g stroke="#000" stroke-width="1.6">
<path d="M703 359V372"/>
<path d="M868.5 359V372"/>
<path d="M1034 359V372"/>
<path d="M703 778V791"/>
<path d="M1184 561H1197"/>
</g>
<path d="M576 558.5L567 563L576 567.5M567 563H576" fill="none" stroke="#000" stroke-width="1.2"/>
<path d="M848.5 778L853.5 787L858.5 778M853.5 787V778" fill="none" stroke="#000" stroke-width="1.2"/>
<text x="620.5" y="370" font-family="Liberation Sans" font-weight="bold" font-size="6" text-anchor="middle" fill="#000">D</text>
<text x="786" y="370" font-family="Liberation Sans" font-weight="bold" font-size="6" text-anchor="middle" fill="#000">C</text>
<text x="951" y="370" font-family="Liberation Sans" font-weight="bold" font-size="6" text-anchor="middle" fill="#000">B</text>
<text x="1109" y="370" font-family="Liberation Sans" font-weight="bold" font-size="6" text-anchor="middle" fill="#000">A</text>
<text x="620.5" y="785" font-family="Liberation Sans" font-weight="bold" font-size="6" text-anchor="middle" fill="#000">D</text>
<text x="786" y="785" font-family="Liberation Sans" font-weight="bold" font-size="6" text-anchor="middle" fill="#000">C</text>
<text x="1188" y="455" font-family="Liberation Sans" font-weight="bold" font-size="6" text-anchor="middle" fill="#000">2</text>
<text x="574" y="455" font-family="Liberation Sans" font-weight="bold" font-size="6" text-anchor="middle" fill="#000">2</text>
<text x="1187" y="675" font-family="Liberation Sans" font-weight="bold" font-size="6" text-anchor="middle" fill="#000">1</text>
<text x="575" y="671" font-family="Liberation Sans" font-weight="bold" font-size="6" text-anchor="middle" fill="#000">1</text>
<g fill="none" stroke="#000" stroke-width="1.5" stroke-linejoin="round">
<path d="M610 640 V637 H607 V610 H610 V570 H607 V543 H610 V501 H607 V474 H610 V424 Q610 421 614 421 H621 Q625 421 625 416 V410 Q625 402 632 401 Q638 400 640 404 Q700 398 772 405 V415 Q772 421 780 422 Q786 422 786 426 V507 H789 V537 H786 V577 H789 V605 H786 V640"/>
</g>
<circle cx="640" cy="609" r="2.8" fill="#000"/><circle cx="650" cy="609" r="2.8" fill="#000"/>
<circle cx="640" cy="609" r="1" fill="#777"/><circle cx="650" cy="609" r="1" fill="#777"/>
<rect x="655" y="415" width="20" height="19" fill="#000"/>
<rect x="641" y="411" width="10" height="6" fill="#000"/>
<rect x="636" y="417.5" width="10" height="6.0" fill="none" stroke="#000" stroke-width="1.2"/>
<rect x="647" y="418" width="5" height="5" fill="#000"/>
<rect x="636" y="427" width="20" height="9" fill="#000"/>
<rect x="614" y="426" width="17" height="13" fill="#000"/>
<rect x="624" y="424" width="4" height="7" fill="none" stroke="#000" stroke-width="1"/>
<rect x="625.5" y="440.5" width="9.5" height="8.5" fill="none" stroke="#000" stroke-width="1.2"/>
<rect x="614.5" y="444" width="10.5" height="5" fill="#000"/>
<rect x="614.5" y="450" width="5.5" height="5" fill="#000"/>
<rect x="626" y="449" width="10" height="5" fill="#000"/>
<rect x="637" y="443.5" width="28.5" height="11.5" fill="none" stroke="#000" stroke-width="1.2"/>
<rect x="648" y="444" width="4" height="3" fill="#000"/>
<rect x="649" y="450" width="3" height="3" fill="#000"/>
<rect x="671.5" y="441" width="3.5" height="9" fill="#000"/>
<rect x="677.5" y="413" width="3.5" height="9" fill="#000"/>
<rect x="677.5" y="446" width="3.5" height="8" fill="#000"/>
<rect x="675" y="428" width="4" height="3" fill="#000"/>
<rect x="742" y="406" width="6" height="10" fill="none" stroke="#000" stroke-width="1.1"/>
<path d="M745 401V406" stroke="#000" stroke-width="1"/>
<rect x="751" y="406" width="6" height="10" fill="none" stroke="#000" stroke-width="1.1"/>
<path d="M754 401V406" stroke="#000" stroke-width="1"/>
<rect x="760.5" y="406" width="6.0" height="10" fill="none" stroke="#000" stroke-width="1.1"/>
<path d="M763.5 401V406" stroke="#000" stroke-width="1"/>
<rect x="752" y="419" width="6.5" height="8" fill="#000"/>
<rect x="731" y="433" width="15" height="4" fill="#000"/>
<rect x="749.5" y="439.5" width="8.5" height="10.5" fill="none" stroke="#000" stroke-width="1.3"/>
<rect x="751.5" y="442" width="4.5" height="6" fill="#000"/>
<path d="M779 438.5 A6 6 0 0 0 779 450.5 H783 V438.5Z" fill="none" stroke="#000" stroke-width="1.1"/>
<rect x="780" y="432" width="4" height="6" fill="#000"/>
<rect x="780" y="440" width="3" height="8" fill="#000"/>
<g fill="none" stroke="#000" stroke-width="1.4" stroke-linejoin="round">
<path d="M607.7 637 H614.7 V639.5 H610.2 V646 L614.7 650.4 V672.4 L610.2 677.7 V736 Q610.6 742.5 614 743 H621.8 Q624.6 744 624.6 747 V757.4 Q625 759.2 628 759.2 H647"/>
<path d="M787.1 630 V636 H776 Q774 638 776 640 H787.1 V739.7 Q786.7 743 783 743 H775 Q772.3 744 772.3 747 V756.5 Q771 759.2 767.6 759.2 H752.7"/>
<path d="M695 762 H730.4"/>
<path d="M732 656 H774.6 V716.4 L769.5 725.3 H717.8 V686 H732Z"/>
</g>
<rect x="655" y="415" width="20.0" height="19.0" fill="#000"/>
<rect x="655.4" y="423.0" width="2.8" height="2.7" fill="#fff"/>
<rect x="659.0" y="418.2" width="4.0" height="0.6" fill="#fff"/>
<rect x="659.4" y="419.2" width="2.8" height="1.9" fill="#fff"/>
<rect x="663.0" y="433.4" width="4.0" height="0.6" fill="#fff"/>
<rect x="667.0" y="422.0" width="4.0" height="0.6" fill="#fff"/>
<rect x="671.0" y="422.0" width="4.0" height="0.6" fill="#fff"/>
<rect x="671.0" y="425.8" width="4.0" height="0.6" fill="#fff"/>
<rect x="671.4" y="430.6" width="2.8" height="2.7" fill="#fff"/>
<rect x="661" y="421" width="7" height="6" fill="#fff" stroke="#000" stroke-width="0.8"/>
<rect x="636" y="427" width="20.0" height="9.0" fill="#000"/>
<rect x="636.0" y="435.4" width="2.5" height="0.6" fill="#fff"/>
<rect x="638.9" y="431.9" width="2.5" height="2.2" fill="#fff"/>
<rect x="641.0" y="435.4" width="2.5" height="0.6" fill="#fff"/>
<rect x="643.5" y="430.9" width="2.5" height="0.6" fill="#fff"/>
<rect x="646.0" y="430.9" width="2.5" height="0.6" fill="#fff"/>
<rect x="646.0" y="435.4" width="2.5" height="0.6" fill="#fff"/>
<rect x="648.5" y="430.9" width="2.5" height="0.6" fill="#fff"/>
<rect x="648.9" y="431.9" width="2.5" height="3.1" fill="#fff"/>
<rect x="651.0" y="435.4" width="2.5" height="0.6" fill="#fff"/>
<rect x="614" y="426" width="17.0" height="13.0" fill="#000"/>
<rect x="614.4" y="426.4" width="2.4" height="1.6" fill="#fff"/>
<rect x="614.0" y="431.9" width="3.4" height="0.6" fill="#fff"/>
<rect x="614.4" y="432.9" width="3.4" height="1.6" fill="#fff"/>
<rect x="614.0" y="438.4" width="3.4" height="0.6" fill="#fff"/>
<rect x="617.4" y="435.1" width="3.4" height="0.6" fill="#fff"/>
<rect x="620.8" y="431.9" width="3.4" height="0.6" fill="#fff"/>
<rect x="621.2" y="432.9" width="1.7" height="1.6" fill="#fff"/>
<rect x="621.2" y="436.1" width="3.4" height="1.6" fill="#fff"/>
<rect x="624.2" y="428.6" width="3.4" height="0.6" fill="#fff"/>
<rect x="624.2" y="435.1" width="3.4" height="0.6" fill="#fff"/>
<rect x="624.6" y="436.1" width="3.4" height="2.3" fill="#fff"/>
<rect x="627.6" y="431.9" width="3.4" height="0.6" fill="#fff"/>
<rect x="627.6" y="435.1" width="3.4" height="0.6" fill="#fff"/>
<rect x="627.6" y="438.4" width="3.4" height="0.6" fill="#fff"/>
<rect x="641" y="411" width="10.0" height="6.0" fill="#000"/>
<rect x="641.4" y="411.4" width="1.2" height="1.5" fill="#fff"/>
<rect x="646.4" y="411.4" width="1.2" height="1.5" fill="#fff"/>
<rect x="646.4" y="414.4" width="1.2" height="1.5" fill="#fff"/>
<rect x="648.5" y="413.4" width="2.5" height="0.6" fill="#fff"/>
<rect x="637.5" y="643.5" width="42.39999999999998" height="37.799999999999955" fill="none" stroke="#000" stroke-width="1.6"/>
<rect x="655" y="659" width="7" height="5" fill="#000"/>
<rect x="640.3" y="686.2" width="33.5" height="33.5" fill="none" stroke="#000" stroke-width="1.5"/>
<rect x="655" y="701" width="6" height="4" fill="#000"/>
<rect x="700.8" y="661.9" width="17.800000000000068" height="17.399999999999977" fill="none" stroke="#000" stroke-width="1.4"/>
<rect x="707.5" y="666" width="4.0" height="9" fill="#000"/>
<rect x="736.2" y="637.3" width="35.799999999999955" height="17.100000000000023" fill="none" stroke="#000" stroke-width="1.4"/>
<text x="755" y="649.5" font-family="Liberation Sans" font-weight="bold" font-size="4.5" text-anchor="middle" fill="#000">J408</text>
<text x="765.5" y="646" font-family="Liberation Sans" font-weight="bold" font-size="4" text-anchor="middle" fill="#000">1</text>
<rect x="747" y="660.6" width="18.5" height="17.899999999999977" fill="none" stroke="#000" stroke-width="1.4"/>
<rect x="754" y="665" width="4" height="9" fill="#000"/>
<circle cx="762.5" cy="663.5" r="0.9" fill="#000"/>
<rect x="728" y="702" width="13.600000000000023" height="14" fill="none" stroke="#000" stroke-width="1.4"/>
<rect x="733" y="705" width="3.5" height="8" fill="#000"/>
<rect x="644" y="722.5" width="15.5" height="15.799999999999955" fill="none" stroke="#000" stroke-width="1.4"/>
<rect x="647" y="729" width="10" height="3" fill="#000"/>
<rect x="730.8" y="727" width="21.5" height="39.200000000000045" fill="none" stroke="#000" stroke-width="1.5"/>
<text transform="translate(744.5,756) rotate(-90)" textLength="15" lengthAdjust="spacingAndGlyphs" font-family="Liberation Sans" font-weight="bold" font-size="6" fill="#000">J1006</text>
<rect x="651" y="750" width="23.799999999999955" height="18" fill="none" stroke="#000" stroke-width="1.5"/>
<rect x="659" y="755" width="8" height="3" fill="#000"/>
<rect x="684" y="750" width="21" height="14" fill="none" stroke="#000" stroke-width="1.5"/>
<rect x="684" y="747" width="21" height="2.5" fill="#000"/>
<rect x="628.3" y="745.3" width="16.700000000000045" height="13.0" fill="none" stroke="#000" stroke-width="1.3"/>
<rect x="635" y="749" width="3" height="5" fill="#000"/>
<circle cx="641" cy="746" r="1.2" fill="#000"/>
<rect x="635" y="639.8" width="22" height="2.800000000000068" fill="none" stroke="#000" stroke-width="1.0"/>
<path d="M646.0 639.8V642.6" stroke="#000" stroke-width="0.8"/>
<rect x="695" y="639.8" width="19.600000000000023" height="2.400000000000091" fill="none" stroke="#000" stroke-width="1.0"/>
<path d="M704.8 639.8V642.2" stroke="#000" stroke-width="0.8"/>
<rect x="658" y="742" width="21.5" height="3.2999999999999545" fill="none" stroke="#000" stroke-width="1.0"/>
<path d="M668.8 742V745.3" stroke="#000" stroke-width="0.8"/>
<rect x="681.8" y="713" width="21.90000000000009" height="3.3999999999999773" fill="none" stroke="#000" stroke-width="1.0"/>
<path d="M692.8 713V716.4" stroke="#000" stroke-width="0.8"/>
<rect x="695" y="713" width="8.399999999999977" height="3.3999999999999773" fill="none" stroke="#000" stroke-width="1.0"/>
<path d="M699.2 713V716.4" stroke="#000" stroke-width="0.8"/>
<rect x="611.5" y="724.3" width="10.299999999999955" height="4.2000000000000455" fill="none" stroke="#000" stroke-width="1.0"/>
<path d="M613.5 726.4H620.8" stroke="#000" stroke-width="0.8"/>
<rect x="611.5" y="733.2" width="10.299999999999955" height="4.599999999999909" fill="none" stroke="#000" stroke-width="1.0"/>
<path d="M613.5 735.5H620.8" stroke="#000" stroke-width="0.8"/>
<rect x="775.5" y="724.3" width="10.299999999999955" height="3.7000000000000455" fill="none" stroke="#000" stroke-width="1.0"/>
<path d="M777.5 726.1H784.8" stroke="#000" stroke-width="0.8"/>
<rect x="775.5" y="733.6" width="10.299999999999955" height="4.199999999999932" fill="none" stroke="#000" stroke-width="1.0"/>
<path d="M777.5 735.7H784.8" stroke="#000" stroke-width="0.8"/>
<rect x="615" y="651.2" width="3.7000000000000455" height="20.399999999999977" fill="none" stroke="#000" stroke-width="0.9"/>
<rect x="616" y="652.5" width="1.7" height="18" fill="#888"/>
<rect x="727.2" y="650.4" width="3.699999999999932" height="19.600000000000023" fill="none" stroke="#000" stroke-width="0.9"/>
<rect x="728.2" y="651.5" width="1.7" height="17.5" fill="#888"/>
<rect x="713" y="695" width="4" height="12" fill="none" stroke="#000" stroke-width="0.9"/>
<rect x="610.6" y="687" width="14.699999999999932" height="13" fill="none" stroke="#000" stroke-width="1.1"/>
<circle cx="617" cy="691" r="1.6" fill="#000"/><circle cx="617" cy="697" r="1.3" fill="#000"/>
<rect x="775.3" y="650.4" width="11.0" height="17.899999999999977" fill="none" stroke="#000" stroke-width="1.1"/>
<circle cx="782.6" cy="652.8" r="1.6" fill="#000"/><circle cx="782.6" cy="665.9" r="1.6" fill="#000"/>
<rect x="781" y="658" width="3" height="3" fill="#000"/>
<rect x="774.5" y="668.3" width="11.799999999999955" height="22.0" fill="none" stroke="#000" stroke-width="1.1"/>
<rect x="775.3" y="670.3" width="7.300000000000068" height="4.100000000000023" fill="#000"/>
<rect x="777.3" y="683" width="4.5" height="6.5" fill="#000"/>
<rect x="775" y="690.3" width="11.700000000000045" height="17.700000000000045" fill="none" stroke="#000" stroke-width="1.1"/>
<circle cx="782.6" cy="693.6" r="1.6" fill="#000"/><circle cx="782.5" cy="706" r="1.6" fill="#000"/>
<rect x="775.3" y="642" width="4.5" height="6.7000000000000455" fill="#000"/>
<rect x="732" y="640" width="4" height="5.5" fill="#000"/>
<rect x="626" y="643.9" width="9.9" height="39.1" fill="#000"/>
<rect x="626.4" y="647.3" width="1.6" height="2.1" fill="#fff"/>
<rect x="626.0" y="655.3" width="3.3" height="0.6" fill="#fff"/>
<rect x="626.4" y="668.4" width="2.3" height="2.1" fill="#fff"/>
<rect x="626.0" y="673.4" width="3.3" height="0.6" fill="#fff"/>
<rect x="626.0" y="676.4" width="3.3" height="0.6" fill="#fff"/>
<rect x="626.0" y="679.4" width="3.3" height="0.6" fill="#fff"/>
<rect x="629.7" y="644.3" width="3.3" height="1.5" fill="#fff"/>
<rect x="629.7" y="647.3" width="1.6" height="1.5" fill="#fff"/>
<rect x="629.3" y="655.3" width="3.3" height="0.6" fill="#fff"/>
<rect x="629.7" y="656.3" width="2.3" height="1.5" fill="#fff"/>
<rect x="629.7" y="659.3" width="3.3" height="1.5" fill="#fff"/>
<rect x="629.3" y="667.4" width="3.3" height="0.6" fill="#fff"/>
<rect x="629.7" y="668.4" width="3.3" height="1.5" fill="#fff"/>
<rect x="629.3" y="676.4" width="3.3" height="0.6" fill="#fff"/>
<rect x="629.3" y="679.4" width="3.3" height="0.6" fill="#fff"/>
<rect x="629.7" y="680.4" width="1.6" height="2.1" fill="#fff"/>
<rect x="633.0" y="644.3" width="3.3" height="1.5" fill="#fff"/>
<rect x="633.0" y="650.3" width="2.3" height="1.5" fill="#fff"/>
<rect x="632.6" y="655.3" width="3.3" height="0.6" fill="#fff"/>
<rect x="633.0" y="656.3" width="3.3" height="2.1" fill="#fff"/>
<rect x="633.0" y="662.3" width="1.6" height="2.1" fill="#fff"/>
<rect x="633.0" y="668.4" width="2.3" height="2.1" fill="#fff"/>
<rect x="632.6" y="673.4" width="3.3" height="0.6" fill="#fff"/>
<rect x="633.0" y="680.4" width="2.3" height="1.5" fill="#fff"/>
<rect x="680.7" y="643.5" width="8.9" height="38.7" fill="#000"/>
<rect x="681.1" y="643.9" width="2.2" height="1.6" fill="#fff"/>
<rect x="681.1" y="650.4" width="4.4" height="2.3" fill="#fff"/>
<rect x="680.7" y="665.5" width="4.4" height="0.6" fill="#fff"/>
<rect x="681.1" y="666.5" width="4.4" height="2.3" fill="#fff"/>
<rect x="681.1" y="669.7" width="4.4" height="2.3" fill="#fff"/>
<rect x="680.7" y="675.2" width="4.4" height="0.6" fill="#fff"/>
<rect x="685.6" y="660.0" width="4.4" height="1.6" fill="#fff"/>
<rect x="685.2" y="665.5" width="4.4" height="0.6" fill="#fff"/>
<rect x="689.6" y="643" width="10.4" height="18.0" fill="#000"/>
<rect x="689.6" y="648.4" width="3.5" height="0.6" fill="#fff"/>
<rect x="689.6" y="654.4" width="3.5" height="0.6" fill="#fff"/>
<rect x="689.6" y="657.4" width="3.5" height="0.6" fill="#fff"/>
<rect x="693.5" y="646.4" width="2.4" height="1.5" fill="#fff"/>
<rect x="693.1" y="654.4" width="3.5" height="0.6" fill="#fff"/>
<rect x="693.1" y="657.4" width="3.5" height="0.6" fill="#fff"/>
<rect x="693.1" y="660.4" width="3.5" height="0.6" fill="#fff"/>
<rect x="696.9" y="646.4" width="1.7" height="1.5" fill="#fff"/>
<rect x="696.9" y="649.4" width="3.5" height="2.1" fill="#fff"/>
<rect x="696.5" y="654.4" width="3.5" height="0.6" fill="#fff"/>
<rect x="696.5" y="657.4" width="3.5" height="0.6" fill="#fff"/>
<rect x="695" y="643" width="22.8" height="18.0" fill="#000"/>
<rect x="698.7" y="643.4" width="1.6" height="1.5" fill="#fff"/>
<rect x="698.3" y="654.4" width="3.3" height="0.6" fill="#fff"/>
<rect x="698.7" y="655.4" width="2.3" height="1.5" fill="#fff"/>
<rect x="698.7" y="658.4" width="1.6" height="2.1" fill="#fff"/>
<rect x="701.9" y="643.4" width="1.6" height="1.5" fill="#fff"/>
<rect x="701.5" y="651.4" width="3.3" height="0.6" fill="#fff"/>
<rect x="701.5" y="654.4" width="3.3" height="0.6" fill="#fff"/>
<rect x="701.9" y="655.4" width="2.3" height="1.5" fill="#fff"/>
<rect x="701.9" y="658.4" width="2.3" height="2.1" fill="#fff"/>
<rect x="705.2" y="655.4" width="3.3" height="2.1" fill="#fff"/>
<rect x="708.0" y="648.4" width="3.3" height="0.6" fill="#fff"/>
<rect x="708.0" y="654.4" width="3.3" height="0.6" fill="#fff"/>
<rect x="711.7" y="655.4" width="1.6" height="1.5" fill="#fff"/>
<rect x="714.9" y="643.4" width="3.3" height="2.1" fill="#fff"/>
<rect x="714.5" y="648.4" width="3.3" height="0.6" fill="#fff"/>
<rect x="714.5" y="654.4" width="3.3" height="0.6" fill="#fff"/>
<rect x="714.9" y="658.4" width="3.3" height="2.1" fill="#fff"/>
<rect x="718.6" y="643.8" width="8.2" height="34.2" fill="#000"/>
<rect x="718.6" y="646.3" width="4.1" height="0.6" fill="#fff"/>
<rect x="718.6" y="649.4" width="4.1" height="0.6" fill="#fff"/>
<rect x="719.0" y="650.4" width="4.1" height="1.6" fill="#fff"/>
<rect x="719.0" y="653.5" width="2.0" height="1.6" fill="#fff"/>
<rect x="719.0" y="656.6" width="2.0" height="2.2" fill="#fff"/>
<rect x="718.6" y="668.1" width="4.1" height="0.6" fill="#fff"/>
<rect x="718.6" y="671.2" width="4.1" height="0.6" fill="#fff"/>
<rect x="723.1" y="647.3" width="2.9" height="1.6" fill="#fff"/>
<rect x="722.7" y="652.5" width="4.1" height="0.6" fill="#fff"/>
<rect x="722.7" y="658.7" width="4.1" height="0.6" fill="#fff"/>
<rect x="723.1" y="666.0" width="2.0" height="1.6" fill="#fff"/>
<rect x="722.7" y="671.2" width="4.1" height="0.6" fill="#fff"/>
<rect x="723.1" y="672.2" width="2.0" height="1.6" fill="#fff"/>
<rect x="734" y="659" width="10.7" height="24.8" fill="#000"/>
<rect x="734.4" y="659.4" width="1.8" height="2.2" fill="#fff"/>
<rect x="734.0" y="664.6" width="3.6" height="0.6" fill="#fff"/>
<rect x="734.0" y="673.9" width="3.6" height="0.6" fill="#fff"/>
<rect x="734.4" y="674.9" width="3.6" height="2.2" fill="#fff"/>
<rect x="738.0" y="665.6" width="3.6" height="1.5" fill="#fff"/>
<rect x="737.6" y="673.9" width="3.6" height="0.6" fill="#fff"/>
<rect x="738.0" y="674.9" width="2.5" height="1.5" fill="#fff"/>
<rect x="738.0" y="678.0" width="2.5" height="1.5" fill="#fff"/>
<rect x="741.1" y="667.7" width="3.6" height="0.6" fill="#fff"/>
<rect x="741.1" y="670.8" width="3.6" height="0.6" fill="#fff"/>
<rect x="741.1" y="673.9" width="3.6" height="0.6" fill="#fff"/>
<rect x="741.5" y="674.9" width="1.8" height="1.5" fill="#fff"/>
<rect x="741.1" y="680.1" width="3.6" height="0.6" fill="#fff"/>
<rect x="766" y="659.7" width="5.6" height="13.5" fill="#000"/>
<rect x="766.0" y="669.2" width="5.6" height="0.6" fill="#fff"/>
<rect x="745" y="679" width="27.4" height="21.0" fill="#000"/>
<rect x="745.4" y="682.4" width="1.7" height="1.5" fill="#fff"/>
<rect x="745.0" y="687.4" width="3.4" height="0.6" fill="#fff"/>
<rect x="745.4" y="694.4" width="1.7" height="2.1" fill="#fff"/>
<rect x="745.0" y="699.4" width="3.4" height="0.6" fill="#fff"/>
<rect x="748.8" y="691.4" width="1.7" height="2.1" fill="#fff"/>
<rect x="752.2" y="685.4" width="2.4" height="1.5" fill="#fff"/>
<rect x="751.9" y="690.4" width="3.4" height="0.6" fill="#fff"/>
<rect x="752.2" y="694.4" width="2.4" height="2.1" fill="#fff"/>
<rect x="755.7" y="688.4" width="3.4" height="1.5" fill="#fff"/>
<rect x="755.3" y="693.4" width="3.4" height="0.6" fill="#fff"/>
<rect x="759.1" y="679.4" width="2.4" height="1.5" fill="#fff"/>
<rect x="759.1" y="685.4" width="2.4" height="2.1" fill="#fff"/>
<rect x="759.1" y="694.4" width="1.7" height="1.5" fill="#fff"/>
<rect x="758.7" y="699.4" width="3.4" height="0.6" fill="#fff"/>
<rect x="762.1" y="684.4" width="3.4" height="0.6" fill="#fff"/>
<rect x="762.1" y="687.4" width="3.4" height="0.6" fill="#fff"/>
<rect x="762.5" y="688.4" width="2.4" height="1.5" fill="#fff"/>
<rect x="765.5" y="681.4" width="3.4" height="0.6" fill="#fff"/>
<rect x="765.9" y="682.4" width="3.4" height="1.5" fill="#fff"/>
<rect x="765.9" y="688.4" width="2.4" height="2.1" fill="#fff"/>
<rect x="769.0" y="684.4" width="3.4" height="0.6" fill="#fff"/>
<rect x="769.0" y="690.4" width="3.4" height="0.6" fill="#fff"/>
<rect x="769.4" y="694.4" width="1.7" height="1.5" fill="#fff"/>
<rect x="769.4" y="697.4" width="1.7" height="2.1" fill="#fff"/>
<rect x="618.3" y="670" width="4.1" height="9.3" fill="#000"/>
<rect x="635.9" y="680.5" width="4.8" height="4.9" fill="#000"/>
<rect x="635.9" y="684.8" width="4.8" height="0.6" fill="#fff"/>
<rect x="653" y="681.3" width="4.9" height="4.1" fill="#000"/>
<rect x="626" y="686.2" width="14.7" height="13.8" fill="#000"/>
<rect x="626.0" y="692.5" width="3.7" height="0.6" fill="#fff"/>
<rect x="626.0" y="695.9" width="3.7" height="0.6" fill="#fff"/>
<rect x="630.1" y="696.9" width="3.7" height="1.7" fill="#fff"/>
<rect x="633.4" y="689.1" width="3.7" height="0.6" fill="#fff"/>
<rect x="633.4" y="692.5" width="3.7" height="0.6" fill="#fff"/>
<rect x="637.4" y="690.1" width="1.8" height="1.7" fill="#fff"/>
<rect x="637.0" y="699.4" width="3.7" height="0.6" fill="#fff"/>
<rect x="676.2" y="685.4" width="8.6" height="7.4" fill="#000"/>
<rect x="676.2" y="692.2" width="4.3" height="0.6" fill="#fff"/>
<rect x="680.5" y="688.5" width="4.3" height="0.6" fill="#fff"/>
<rect x="680.9" y="689.5" width="2.1" height="1.8" fill="#fff"/>
<rect x="699" y="683" width="7.4" height="5.7" fill="#000"/>
<rect x="702.7" y="688.1" width="3.7" height="0.6" fill="#fff"/>
<rect x="719.5" y="688.7" width="12.5" height="11.3" fill="#000"/>
<rect x="719.9" y="689.1" width="2.1" height="1.9" fill="#fff"/>
<rect x="719.9" y="696.6" width="2.1" height="1.9" fill="#fff"/>
<rect x="724.1" y="689.1" width="4.2" height="1.9" fill="#fff"/>
<rect x="724.1" y="692.9" width="2.9" height="1.9" fill="#fff"/>
<rect x="621.8" y="700" width="17.7" height="24.8" fill="#000"/>
<rect x="621.8" y="718.0" width="3.5" height="0.6" fill="#fff"/>
<rect x="621.8" y="724.2" width="3.5" height="0.6" fill="#fff"/>
<rect x="625.3" y="714.9" width="3.5" height="0.6" fill="#fff"/>
<rect x="625.7" y="719.0" width="3.5" height="2.2" fill="#fff"/>
<rect x="628.9" y="705.6" width="3.5" height="0.6" fill="#fff"/>
<rect x="628.9" y="708.7" width="3.5" height="0.6" fill="#fff"/>
<rect x="628.9" y="714.9" width="3.5" height="0.6" fill="#fff"/>
<rect x="628.9" y="718.0" width="3.5" height="0.6" fill="#fff"/>
<rect x="629.3" y="719.0" width="2.5" height="2.2" fill="#fff"/>
<rect x="632.8" y="700.4" width="2.5" height="2.2" fill="#fff"/>
<rect x="632.4" y="708.7" width="3.5" height="0.6" fill="#fff"/>
<rect x="632.8" y="709.7" width="2.5" height="1.5" fill="#fff"/>
<rect x="632.8" y="719.0" width="1.8" height="2.2" fill="#fff"/>
<rect x="636.0" y="714.9" width="3.5" height="0.6" fill="#fff"/>
<rect x="636.0" y="718.0" width="3.5" height="0.6" fill="#fff"/>
<rect x="636.4" y="722.1" width="2.5" height="1.5" fill="#fff"/>
<rect x="626" y="729" width="15.3" height="8.0" fill="#000"/>
<rect x="626.4" y="733.4" width="2.7" height="2.8" fill="#fff"/>
<rect x="629.8" y="736.4" width="3.8" height="0.6" fill="#fff"/>
<rect x="633.6" y="732.4" width="3.8" height="0.6" fill="#fff"/>
<rect x="637.9" y="729.4" width="1.9" height="2.8" fill="#fff"/>
<rect x="637.9" y="733.4" width="2.7" height="2.8" fill="#fff"/>
<rect x="626" y="738.8" width="16.2" height="4.2" fill="#000"/>
<rect x="629.2" y="742.4" width="3.2" height="0.6" fill="#fff"/>
<rect x="661" y="724" width="16.6" height="13.0" fill="#000"/>
<rect x="661.0" y="726.6" width="3.3" height="0.6" fill="#fff"/>
<rect x="661.4" y="727.6" width="3.3" height="1.6" fill="#fff"/>
<rect x="664.7" y="724.4" width="2.3" height="1.6" fill="#fff"/>
<rect x="664.3" y="729.9" width="3.3" height="0.6" fill="#fff"/>
<rect x="668.0" y="724.4" width="1.7" height="2.3" fill="#fff"/>
<rect x="668.0" y="727.6" width="1.7" height="1.6" fill="#fff"/>
<rect x="668.0" y="730.9" width="1.7" height="1.6" fill="#fff"/>
<rect x="667.6" y="736.4" width="3.3" height="0.6" fill="#fff"/>
<rect x="671.0" y="729.9" width="3.3" height="0.6" fill="#fff"/>
<rect x="671.4" y="730.9" width="2.3" height="1.6" fill="#fff"/>
<rect x="674.3" y="726.6" width="3.3" height="0.6" fill="#fff"/>
<rect x="674.3" y="729.9" width="3.3" height="0.6" fill="#fff"/>
<rect x="674.3" y="736.4" width="3.3" height="0.6" fill="#fff"/>
<rect x="675.8" y="699.6" width="29.2" height="11.2" fill="#000"/>
<rect x="676.2" y="700.0" width="3.2" height="1.9" fill="#fff"/>
<rect x="675.8" y="710.2" width="3.2" height="0.6" fill="#fff"/>
<rect x="679.4" y="700.0" width="2.3" height="1.9" fill="#fff"/>
<rect x="685.5" y="702.7" width="3.2" height="0.6" fill="#fff"/>
<rect x="688.8" y="702.7" width="3.2" height="0.6" fill="#fff"/>
<rect x="688.8" y="706.5" width="3.2" height="0.6" fill="#fff"/>
<rect x="692.4" y="707.5" width="2.3" height="1.9" fill="#fff"/>
<rect x="698.5" y="710.2" width="3.2" height="0.6" fill="#fff"/>
<rect x="701.8" y="710.2" width="3.2" height="0.6" fill="#fff"/>
<rect x="674.8" y="710.8" width="6.5" height="5.6" fill="#000"/>
<rect x="678.0" y="715.8" width="3.2" height="0.6" fill="#fff"/>
<rect x="694.4" y="728" width="8.4" height="7.5" fill="#000"/>
<rect x="694.8" y="728.4" width="2.1" height="1.9" fill="#fff"/>
<rect x="699.0" y="728.4" width="2.1" height="1.9" fill="#fff"/>
<rect x="698.6" y="734.9" width="4.2" height="0.6" fill="#fff"/>
<rect x="720" y="695" width="6.7" height="21.0" fill="#000"/>
<rect x="720.4" y="695.4" width="2.3" height="1.5" fill="#fff"/>
<rect x="720.0" y="712.4" width="3.4" height="0.6" fill="#fff"/>
<rect x="723.4" y="700.4" width="3.4" height="0.6" fill="#fff"/>
<rect x="723.8" y="701.4" width="1.7" height="1.5" fill="#fff"/>
<rect x="723.8" y="704.4" width="2.3" height="2.1" fill="#fff"/>
<rect x="723.4" y="712.4" width="3.4" height="0.6" fill="#fff"/>
<rect x="743.4" y="695" width="28.9" height="28.0" fill="#000"/>
<rect x="743.4" y="697.5" width="3.2" height="0.6" fill="#fff"/>
<rect x="743.8" y="698.5" width="1.6" height="1.6" fill="#fff"/>
<rect x="743.8" y="701.6" width="1.6" height="1.6" fill="#fff"/>
<rect x="743.4" y="706.8" width="3.2" height="0.6" fill="#fff"/>
<rect x="743.4" y="713.1" width="3.2" height="0.6" fill="#fff"/>
<rect x="743.4" y="719.3" width="3.2" height="0.6" fill="#fff"/>
<rect x="743.4" y="722.4" width="3.2" height="0.6" fill="#fff"/>
<rect x="746.6" y="697.5" width="3.2" height="0.6" fill="#fff"/>
<rect x="747.0" y="701.6" width="3.2" height="1.6" fill="#fff"/>
<rect x="747.0" y="714.1" width="3.2" height="2.2" fill="#fff"/>
<rect x="747.0" y="720.3" width="3.2" height="2.2" fill="#fff"/>
<rect x="750.2" y="695.4" width="1.6" height="2.2" fill="#fff"/>
<rect x="750.2" y="698.5" width="1.6" height="2.2" fill="#fff"/>
<rect x="749.8" y="703.7" width="3.2" height="0.6" fill="#fff"/>
<rect x="749.8" y="716.2" width="3.2" height="0.6" fill="#fff"/>
<rect x="753.0" y="697.5" width="3.2" height="0.6" fill="#fff"/>
<rect x="753.4" y="701.6" width="2.2" height="2.2" fill="#fff"/>
<rect x="753.0" y="710.0" width="3.2" height="0.6" fill="#fff"/>
<rect x="753.4" y="711.0" width="1.6" height="2.2" fill="#fff"/>
<rect x="753.4" y="714.1" width="3.2" height="1.6" fill="#fff"/>
<rect x="756.2" y="697.5" width="3.2" height="0.6" fill="#fff"/>
<rect x="756.6" y="698.5" width="2.2" height="2.2" fill="#fff"/>
<rect x="756.6" y="701.6" width="1.6" height="1.6" fill="#fff"/>
<rect x="756.2" y="716.2" width="3.2" height="0.6" fill="#fff"/>
<rect x="759.5" y="710.0" width="3.2" height="0.6" fill="#fff"/>
<rect x="759.5" y="713.1" width="3.2" height="0.6" fill="#fff"/>
<rect x="759.9" y="714.1" width="2.2" height="1.6" fill="#fff"/>
<rect x="759.9" y="717.2" width="1.6" height="1.6" fill="#fff"/>
<rect x="759.9" y="720.3" width="3.2" height="2.2" fill="#fff"/>
<rect x="763.1" y="698.5" width="1.6" height="1.6" fill="#fff"/>
<rect x="763.1" y="720.3" width="1.6" height="2.2" fill="#fff"/>
<rect x="766.3" y="704.7" width="3.2" height="1.6" fill="#fff"/>
<rect x="766.3" y="707.8" width="3.2" height="1.6" fill="#fff"/>
<rect x="765.9" y="713.1" width="3.2" height="0.6" fill="#fff"/>
<rect x="765.9" y="719.3" width="3.2" height="0.6" fill="#fff"/>
<rect x="766.3" y="720.3" width="2.2" height="2.2" fill="#fff"/>
<rect x="769.1" y="700.6" width="3.2" height="0.6" fill="#fff"/>
<rect x="769.1" y="706.8" width="3.2" height="0.6" fill="#fff"/>
<rect x="769.5" y="720.3" width="1.6" height="1.6" fill="#fff"/>
<rect x="695" y="695" width="15.8" height="15.0" fill="#000"/>
<rect x="695.4" y="698.4" width="2.0" height="1.5" fill="#fff"/>
<rect x="695.4" y="701.4" width="2.8" height="2.1" fill="#fff"/>
<rect x="695.4" y="707.4" width="2.8" height="1.5" fill="#fff"/>
<rect x="699.0" y="703.4" width="3.9" height="0.6" fill="#fff"/>
<rect x="699.0" y="709.4" width="3.9" height="0.6" fill="#fff"/>
<rect x="703.3" y="695.4" width="3.9" height="2.1" fill="#fff"/>
<rect x="703.3" y="698.4" width="2.0" height="2.1" fill="#fff"/>
<rect x="703.3" y="707.4" width="3.9" height="1.5" fill="#fff"/>
<rect x="706.8" y="697.4" width="3.9" height="0.6" fill="#fff"/>
<rect x="706.8" y="706.4" width="3.9" height="0.6" fill="#fff"/>
<rect x="706.8" y="709.4" width="3.9" height="0.6" fill="#fff"/>
<rect x="716.4" y="728" width="14.0" height="31.2" fill="#000"/>
<rect x="716.4" y="730.5" width="3.5" height="0.6" fill="#fff"/>
<rect x="716.4" y="739.9" width="3.5" height="0.6" fill="#fff"/>
<rect x="716.4" y="746.1" width="3.5" height="0.6" fill="#fff"/>
<rect x="716.4" y="749.2" width="3.5" height="0.6" fill="#fff"/>
<rect x="716.4" y="755.5" width="3.5" height="0.6" fill="#fff"/>
<rect x="719.9" y="730.5" width="3.5" height="0.6" fill="#fff"/>
<rect x="720.3" y="731.5" width="3.5" height="2.2" fill="#fff"/>
<rect x="719.9" y="736.8" width="3.5" height="0.6" fill="#fff"/>
<rect x="719.9" y="743.0" width="3.5" height="0.6" fill="#fff"/>
<rect x="720.3" y="744.0" width="3.5" height="1.6" fill="#fff"/>
<rect x="719.9" y="758.6" width="3.5" height="0.6" fill="#fff"/>
<rect x="723.4" y="736.8" width="3.5" height="0.6" fill="#fff"/>
<rect x="723.4" y="743.0" width="3.5" height="0.6" fill="#fff"/>
<rect x="723.8" y="744.0" width="3.5" height="1.6" fill="#fff"/>
<rect x="723.4" y="752.4" width="3.5" height="0.6" fill="#fff"/>
<rect x="723.4" y="758.6" width="3.5" height="0.6" fill="#fff"/>
<rect x="726.9" y="736.8" width="3.5" height="0.6" fill="#fff"/>
<rect x="726.9" y="743.0" width="3.5" height="0.6" fill="#fff"/>
<rect x="727.3" y="747.1" width="1.8" height="2.2" fill="#fff"/>
<rect x="727.3" y="750.2" width="3.5" height="1.6" fill="#fff"/>
<rect x="752.3" y="728.5" width="17.2" height="29.8" fill="#000"/>
<rect x="752.3" y="731.2" width="3.4" height="0.6" fill="#fff"/>
<rect x="752.3" y="734.5" width="3.4" height="0.6" fill="#fff"/>
<rect x="752.7" y="735.5" width="1.7" height="1.7" fill="#fff"/>
<rect x="752.7" y="742.1" width="2.4" height="2.3" fill="#fff"/>
<rect x="752.7" y="748.8" width="1.7" height="1.7" fill="#fff"/>
<rect x="752.7" y="752.1" width="2.4" height="1.7" fill="#fff"/>
<rect x="752.3" y="757.7" width="3.4" height="0.6" fill="#fff"/>
<rect x="755.7" y="731.2" width="3.4" height="0.6" fill="#fff"/>
<rect x="755.7" y="734.5" width="3.4" height="0.6" fill="#fff"/>
<rect x="755.7" y="737.8" width="3.4" height="0.6" fill="#fff"/>
<rect x="756.1" y="755.4" width="3.4" height="2.3" fill="#fff"/>
<rect x="759.2" y="734.5" width="3.4" height="0.6" fill="#fff"/>
<rect x="759.2" y="741.1" width="3.4" height="0.6" fill="#fff"/>
<rect x="759.2" y="744.5" width="3.4" height="0.6" fill="#fff"/>
<rect x="762.6" y="731.2" width="3.4" height="0.6" fill="#fff"/>
<rect x="763.0" y="732.2" width="3.4" height="1.7" fill="#fff"/>
<rect x="762.6" y="741.1" width="3.4" height="0.6" fill="#fff"/>
<rect x="763.0" y="745.5" width="1.7" height="1.7" fill="#fff"/>
<rect x="763.0" y="755.4" width="3.4" height="2.3" fill="#fff"/>
<rect x="766.5" y="732.2" width="2.4" height="2.3" fill="#fff"/>
<rect x="766.5" y="748.8" width="1.7" height="1.7" fill="#fff"/>
<rect x="766.1" y="757.7" width="3.4" height="0.6" fill="#fff"/>
<rect x="689.6" y="661" width="9.4" height="19.0" fill="#000"/>
<rect x="689.6" y="669.9" width="4.7" height="0.6" fill="#fff"/>
<rect x="694.7" y="670.9" width="2.3" height="1.6" fill="#fff"/>
<rect x="684" y="690" width="16.0" height="10.0" fill="#000"/>
<rect x="684.0" y="692.7" width="3.2" height="0.6" fill="#fff"/>
<rect x="684.4" y="697.1" width="2.2" height="1.7" fill="#fff"/>
<rect x="690.8" y="690.4" width="1.6" height="2.3" fill="#fff"/>
<rect x="690.4" y="696.1" width="3.2" height="0.6" fill="#fff"/>
<rect x="690.8" y="697.1" width="1.6" height="2.3" fill="#fff"/>
<rect x="693.6" y="696.1" width="3.2" height="0.6" fill="#fff"/>
<rect x="696.8" y="692.7" width="3.2" height="0.6" fill="#fff"/>
<rect x="662" y="750" width="10.0" height="2.0" fill="#000"/>
<rect x="662.0" y="751.4" width="3.3" height="0.6" fill="#fff"/>
<rect x="733" y="716.5" width="8.0" height="6.5" fill="#000"/>
<rect x="737.0" y="722.4" width="4.0" height="0.6" fill="#fff"/>
<rect x="689.2" y="685.8" width="8.2" height="5.3" fill="#fff" stroke="#000" stroke-width="1"/>
<rect x="691.2" y="687.8" width="4.199999999999932" height="1.3000000000000682" fill="#000"/>
<rect x="692.5" y="692.8" width="7.5" height="5.7" fill="#fff" stroke="#000" stroke-width="1"/>
<rect x="694.5" y="694.8" width="3.5" height="1.7000000000000455" fill="#000"/>
<rect x="704.8" y="703" width="5.6" height="6.4" fill="#fff" stroke="#000" stroke-width="1"/>
<rect x="706.8" y="705" width="1.6000000000000227" height="2.3999999999999773" fill="#000"/>
<rect x="757" y="711" width="9.0" height="11.0" fill="#fff" stroke="#000" stroke-width="1"/>
<rect x="759" y="713" width="5" height="7" fill="#000"/>
<rect x="747" y="701" width="8.0" height="7.0" fill="#fff" stroke="#000" stroke-width="1"/>
<rect x="749" y="703" width="4" height="3" fill="#000"/>
<rect x="744" y="670" width="3.0" height="6.0" fill="#fff" stroke="#000" stroke-width="1"/>
<rect x="746" y="672" width="-1" height="2" fill="#000"/>
<rect x="642.5" y="750" width="7" height="6" rx="2.5" fill="#000"/>
<rect x="642.5" y="762" width="7" height="6" rx="2.5" fill="#000"/>
<rect x="676.5" y="750" width="7" height="6" rx="2.5" fill="#000"/>
<rect x="676.5" y="762" width="7" height="6" rx="2.5" fill="#000"/>
<g font-family="Liberation Sans" font-weight="bold" font-size="5.2" fill="#000" stroke="#000" stroke-width="0.6" word-spacing="1.8">
<text transform="translate(842.3,398) scale(0.64,1)">CAMSCLK J811-13 8.40 27.415</text>
<text transform="translate(842.3,404) scale(0.64,1)">CAMPWDN J811-18 6.90 24.365</text>
<text transform="translate(842.3,410) scale(0.64,1)">CAMRST J811-19 6.60 27.415</text>
<text transform="translate(842.3,416) scale(0.64,1)">CAMSCLK J811-20 6.30 24.365</text>
<text transform="translate(842.3,421) scale(0.64,1)">CAMSDAT J811-22 5.70 24.365</text>
<text transform="translate(842.3,427) scale(0.64,1)">CTOUCHSIGN J881-6 -12.40 29.48</text>
<text transform="translate(842.3,433) scale(0.64,1)">EINTCTP J881-5 -11.99 29.48</text>
<text transform="translate(842.3,439) scale(0.64,1)">EINTHEADSET1 J1006-2 18.335 34.53</text>
<text transform="translate(842.3,444) scale(0.64,1)">FLASHM BL801-1 8.51 33.80</text>
<text transform="translate(842.3,450) scale(0.64,1)">FLASHP BL800-1 8.51 34.76</text>
<text transform="translate(842.3,456) scale(0.64,1)">FMANT J1008-6 18.335 26.48</text>
<text transform="translate(842.3,462) scale(0.64,1)">GND BL100-1 15.2 36.13</text>
<text transform="translate(842.3,467) scale(0.64,1)">GND BL501-1 23.76 137.43</text>
<text transform="translate(842.3,473) scale(0.64,1)">GND BL500-1 28.76 137.43</text>
<text transform="translate(842.3,479) scale(0.64,1)">GND BL701-1 34.76 35.90</text>
<text transform="translate(842.3,485) scale(0.64,1)">GND BL703-1 -17.29 35.87</text>
<text transform="translate(842.3,490) scale(0.64,1)">GND BT100-2 25.16 125.40</text>
<text transform="translate(842.3,496) scale(0.64,1)">GND J100-3 -3.50 127.70</text>
<text transform="translate(842.3,502) scale(0.64,1)">GND J100-4 -6.50 131.70</text>
<text transform="translate(842.3,508) scale(0.64,1)">GND J102-1 -15.40 42.43</text>
<text transform="translate(842.3,513) scale(0.64,1)">GND J102-2 -15.40 43.33</text>
<text transform="translate(842.3,519) scale(0.64,1)">GND J102-3 -15.40 45.60</text>
<text transform="translate(842.3,525) scale(0.64,1)">GND J102-4 -15.40 46.83</text>
<text transform="translate(842.3,531) scale(0.64,1)">GND J102-5 -15.40 48.13</text>
<text transform="translate(842.3,536) scale(0.64,1)">GND J103-1 14.85 47.33</text>
<text transform="translate(842.3,542) scale(0.64,1)">GND J103-2 14.85 63.53</text>
<text transform="translate(842.3,548) scale(0.64,1)">GND J103-3 14.85 65.30</text>
<text transform="translate(842.3,554) scale(0.64,1)">GND J103-4 14.85 67.83</text>
<text transform="translate(842.3,559) scale(0.64,1)">GND J103-5 14.85 68.33</text>
<text transform="translate(842.3,565) scale(0.64,1)">GND J104-1 -3.90 30.33</text>
<text transform="translate(842.3,571) scale(0.64,1)">GND J104-2 -2.60 30.33</text>
<text transform="translate(842.3,577) scale(0.64,1)">GND J104-3 -6.90 30.33</text>
<text transform="translate(842.3,582) scale(0.64,1)">GND J104-4 0.61 30.33</text>
<text transform="translate(842.3,588) scale(0.64,1)">GND J104-5 2.11 30.33</text>
<text transform="translate(842.3,594) scale(0.64,1)">GND J105-1 -17.64 53.83</text>
<text transform="translate(842.3,600) scale(0.64,1)">GND J105-2 -17.64 55.13</text>
<text transform="translate(842.3,605) scale(0.64,1)">GND J105-3 -17.64 56.80</text>
<text transform="translate(842.3,611) scale(0.64,1)">GND J105-4 -17.64 58.63</text>
<text transform="translate(842.3,617) scale(0.64,1)">GND J105-5 -17.64 59.93</text>
<text transform="translate(842.3,623) scale(0.64,1)">GND J106-1 18.62 54.30</text>
<text transform="translate(842.3,628) scale(0.64,1)">GND J106-2 18.62 55.30</text>
<text transform="translate(842.3,634) scale(0.64,1)">GND J106-3 18.62 57.33</text>
<text transform="translate(842.3,640) scale(0.64,1)">GND J106-4 18.62 59.00</text>
<text transform="translate(842.3,646) scale(0.64,1)">GND J106-5 18.62 60.30</text>
<text transform="translate(842.3,651) scale(0.64,1)">GND J107-1 -11.20 63.40</text>
<text transform="translate(842.3,657) scale(0.64,1)">GND J107-2 -9.90 63.40</text>
</g>
<g font-family="Liberation Sans" font-weight="bold" font-size="5.2" fill="#000" stroke="#000" stroke-width="0.6" word-spacing="1.8">
<text transform="translate(940,398) scale(0.64,1)">GND J807-3 -8.34 63.40</text>
<text transform="translate(940,404) scale(0.64,1)">GND J807-4 -6.40 63.40</text>
<text transform="translate(940,410) scale(0.64,1)">GND J807-5 -5.40 63.40</text>
<text transform="translate(940,416) scale(0.64,1)">GND J808-1 7.34 63.40</text>
<text transform="translate(940,421) scale(0.64,1)">GND J808-2 8.61 63.40</text>
<text transform="translate(940,427) scale(0.64,1)">GND J808-3 10.30 63.40</text>
<text transform="translate(940,433) scale(0.64,1)">GND J808-4 12.31 63.40</text>
<text transform="translate(940,439) scale(0.64,1)">GND J808-5 13.61 63.40</text>
<text transform="translate(940,444) scale(0.64,1)">GND J809-1 9.90 28.50</text>
<text transform="translate(940,450) scale(0.64,1)">GND J809-2 8.60 28.50</text>
<text transform="translate(940,456) scale(0.64,1)">GND J809-3 6.91 28.50</text>
<text transform="translate(940,462) scale(0.64,1)">GND J809-4 5.40 28.50</text>
<text transform="translate(940,467) scale(0.64,1)">GND J809-5 3.90 28.50</text>
<text transform="translate(940,473) scale(0.64,1)">GND J202-3 34.30 44.50</text>
<text transform="translate(940,479) scale(0.64,1)">GND J202-4 30.81 46.80</text>
<text transform="translate(940,485) scale(0.64,1)">GND J202-5 36.81 42.32</text>
<text transform="translate(940,490) scale(0.64,1)">GND J202-6 35.90 46.25</text>
<text transform="translate(940,496) scale(0.64,1)">GND J202-7 35.90 42.43</text>
<text transform="translate(940,502) scale(0.64,1)">GND J204-3 34.30 57.50</text>
<text transform="translate(940,508) scale(0.64,1)">GND J204-4 36.81 58.80</text>
<text transform="translate(940,513) scale(0.64,1)">GND J204-5 36.81 55.32</text>
<text transform="translate(940,519) scale(0.64,1)">GND J204-6 35.90 58.25</text>
<text transform="translate(940,525) scale(0.64,1)">GND J204-7 35.90 55.43</text>
<text transform="translate(940,531) scale(0.64,1)">GND J205-1 -16.84 43.80</text>
<text transform="translate(940,536) scale(0.64,1)">GND J205-3 -16.84 45.50</text>
<text transform="translate(940,542) scale(0.64,1)">GND J205-4 -19.39 43.32</text>
<text transform="translate(940,548) scale(0.64,1)">GND J205-5 -19.39 47.80</text>
<text transform="translate(940,554) scale(0.64,1)">GND J205-6 -18.44 43.43</text>
<text transform="translate(940,559) scale(0.64,1)">GND J205-7 -18.44 47.25</text>
<text transform="translate(940,565) scale(0.64,1)">GND J408-8 29.61 63.365</text>
<text transform="translate(940,571) scale(0.64,1)">GND J408-9 32.16 60.61</text>
<text transform="translate(940,577) scale(0.64,1)">GND J408-10 34.335 58.435</text>
<text transform="translate(940,582) scale(0.64,1)">GND J408-11 21.435 60.61</text>
<text transform="translate(940,588) scale(0.64,1)">GND J408-12 34.935 61.90</text>
<text transform="translate(940,594) scale(0.64,1)">GND J811-1 12.00 27.415</text>
<text transform="translate(940,600) scale(0.64,1)">GND J811-3 11.40 27.415</text>
<text transform="translate(940,605) scale(0.64,1)">GND J811-6 10.20 24.365</text>
<text transform="translate(940,611) scale(0.64,1)">GND J811-9 9.00 27.415</text>
<text transform="translate(940,617) scale(0.64,1)">GND J811-12 8.10 24.365</text>
<text transform="translate(940,623) scale(0.64,1)">GND J811-14 8.40 24.365</text>
<text transform="translate(940,628) scale(0.64,1)">GND J811-17 7.20 27.415</text>
<text transform="translate(940,634) scale(0.64,1)">GND J811-23 5.40 27.415</text>
<text transform="translate(940,640) scale(0.64,1)">GND J811-26 12.91 27.13</text>
<text transform="translate(940,646) scale(0.64,1)">GND J811-25 4.61 27.13</text>
<text transform="translate(940,651) scale(0.64,1)">GND J881-2 -10.49 28.48</text>
<text transform="translate(940,657) scale(0.64,1)">GND J881-7 -13.71 28.61</text>
</g>
<g font-family="Liberation Sans" font-weight="bold" font-size="5.2" fill="#000" stroke="#000" stroke-width="0.6" word-spacing="1.8">
<text transform="translate(1031,400) scale(0.64,1)">GND J881-8 -9.77 26.61</text>
<text transform="translate(1031,406) scale(0.64,1)">GND J1005-5 -1.44 26.85</text>
<text transform="translate(1031,412) scale(0.64,1)">GND J1005-6 -7.00 26.325</text>
<text transform="translate(1031,418) scale(0.64,1)">GND J1005-7 2.50 26.325</text>
<text transform="translate(1031,423) scale(0.64,1)">GND J1005-8 -7.04 25.025</text>
<text transform="translate(1031,429) scale(0.64,1)">GND J1005-9 2.54 25.025</text>
<text transform="translate(1031,435) scale(0.64,1)">JTCLK TP304-1 -12.07 36.93</text>
<text transform="translate(1031,441) scale(0.64,1)">JTMS TP300-1 -11.33 36.90</text>
<text transform="translate(1031,446) scale(0.64,1)">KCOL0 J1005-4 -2.09 26.65</text>
<text transform="translate(1031,452) scale(0.64,1)">LAUDSPKN BL1001-1 2.56 125.28</text>
<text transform="translate(1031,458) scale(0.64,1)">LAUDSPKP BL1000-1 2.56 125.17</text>
<text transform="translate(1031,464) scale(0.64,1)">MIPICKN J811-4 11.10 24.365</text>
<text transform="translate(1031,469) scale(0.64,1)">MIPICKP J811-5 10.80 27.415</text>
<text transform="translate(1031,475) scale(0.64,1)">MIPIRDN0 J811-10 9.30 24.365</text>
<text transform="translate(1031,481) scale(0.64,1)">MIPIRDN1 J811-7 10.20 27.415</text>
<text transform="translate(1031,487) scale(0.64,1)">MIPIRDP0 J811-11 9.00 27.415</text>
<text transform="translate(1031,492) scale(0.64,1)">MIPIRDP1 J811-8 9.60 24.365</text>
<text transform="translate(1031,498) scale(0.64,1)">PWRKEY J205-2 -16.80 47.20</text>
<text transform="translate(1031,504) scale(0.64,1)">SCLK J408-5 25.91 63.365</text>
<text transform="translate(1031,510) scale(0.64,1)">SDIO0 J408-3 28.11 63.365</text>
<text transform="translate(1031,515) scale(0.64,1)">SDDAT0 J408-7 23.71 63.365</text>
<text transform="translate(1031,521) scale(0.64,1)">SDDAT1 J408-8 22.61 63.365</text>
<text transform="translate(1031,527) scale(0.64,1)">SDDAT2 J408-1 30.31 63.365</text>
<text transform="translate(1031,533) scale(0.64,1)">SDDAT3 J408-2 29.31 63.365</text>
<text transform="translate(1031,538) scale(0.64,1)">SENSESCLK J881-3 -10.90 29.48</text>
<text transform="translate(1031,544) scale(0.64,1)">SENSESDAT J881-4 -11.40 29.48</text>
<text transform="translate(1031,550) scale(0.64,1)">UNNAMED6RESISTORI166A BT100-1 26.16 126.28</text>
<text transform="translate(1031,556) scale(0.64,1)">UNNAMED9CONNP5I79A J1006-2 -6.50 127.70</text>
<text transform="translate(1031,561) scale(0.64,1)">UNNAMED9SHIELDP1I11A BL702-1 -17.24 32.90</text>
<text transform="translate(1031,567) scale(0.64,1)">UNNAMED9SHIELDP1I12A BL700-1 34.76 32.90</text>
<text transform="translate(1031,573) scale(0.64,1)">UNNAMED9SIMP5I2AB J1005-2 -3.29 26.65</text>
<text transform="translate(1031,579) scale(0.64,1)">UNNAMED9SIMP5I3AB J1005-3 -2.74 26.65</text>
<text transform="translate(1031,584) scale(0.64,1)">UNNAMED17JACKP3EARSPK1AXIA J1006-1 26.435 26.48</text>
<text transform="translate(1031,590) scale(0.64,1)">UNNAMED17JACKP3EARSPK2AXIA J1006-4 26.435 34.53</text>
<text transform="translate(1031,596) scale(0.64,1)">UNNAMED17JACKP3EARSPK3AXIA J1006-5 18.335 28.33</text>
<text transform="translate(1031,602) scale(0.64,1)">UNNAMED9CONNP5I1AB J204-1 34.41 58.20</text>
<text transform="translate(1031,607) scale(0.64,1)">UNNAMED9SPRINGI1AB J202-2 34.41 43.80</text>
<text transform="translate(1031,613) scale(0.64,1)">UNNAMED9SPRINGI2AB J204-2 34.41 55.80</text>
<text transform="translate(1031,619) scale(0.64,1)">UNNAMED9SPRINGI3AB J202-1 34.41 46.20</text>
<text transform="translate(1031,625) scale(0.64,1)">UNNAMED9SHIELDP1I13A BL500-1 26.76 137.43</text>
<text transform="translate(1031,630) scale(0.64,1)">UTXD1 TP301-1 -6.84 75.00</text>
<text transform="translate(1031,636) scale(0.64,1)">URXD1 TP302-1 -10.13 74.87</text>
<text transform="translate(1031,642) scale(0.64,1)">VBACKUP J100-1 -0.20 127.70</text>
<text transform="translate(1031,648) scale(0.64,1)">VCAMA J811-21 6.00 27.415</text>
<text transform="translate(1031,653) scale(0.64,1)">VCAMAF J811-2 11.70 24.365</text>
<text transform="translate(1031,659) scale(0.64,1)">VCAMD J811-16 7.50 24.365</text>
<text transform="translate(1031,665) scale(0.64,1)">VCAMIO J811-15 7.80 27.415</text>
<text transform="translate(1031,671) scale(0.64,1)">VSIM J1005-1 -4.04 26.65</text>
<text transform="translate(1031,676) scale(0.64,1)">VUSB J881-1 -9.99 29.48</text>
<text transform="translate(1031,682) scale(0.64,1)">VRDIO J408-4 27.01 63.365</text>
</g>
<g fill="none" stroke="#000" stroke-width="1.4">
<rect x="907" y="702.5" width="277" height="75"/>
<path d="M907 718.5H1184M907 753.5H1184"/>
<path d="M931 702.5V718.5M1006.5 702.5V718.5M1044.5 702.5V718.5M1068 702.5V718.5M1145 702.5V718.5"/>
<path d="M1108 718.5V753.5M1108 741.5H1184"/>
<path d="M1042 753.5V777.5M1062 753.5V777.5M1126 763V777.5M1146 763V777.5M1166 763V777.5M1062 763H1184"/>
<rect x="1136" y="684.5" width="48" height="18"/><path d="M1136 694H1184"/>
<rect x="877.5" y="706.8" width="29.5" height="70.5"/><path d="M891 706.8V777.3"/>
</g>
<g stroke="#000" stroke-width="1">
<path d="M877.5 713.85H907"/>
<path d="M877.5 720.90H907"/>
<path d="M877.5 727.95H907"/>
<path d="M877.5 735.00H907"/>
<path d="M877.5 742.05H907"/>
<path d="M877.5 749.10H907"/>
<path d="M877.5 756.15H907"/>
<path d="M877.5 763.20H907"/>
<path d="M877.5 770.25H907"/>
</g>
<g stroke="#000" stroke-width="1.6">
<path d="M933 717.3H1003M1009 717.3H1041M1070 717.3H1134M1147 717.3H1181"/>
<path d="M949 727H1105M949 734.3H1105M949 742.6H1105M949 750.4H1105"/>
<path d="M952 760.5H1037M1144 751.6H1172"/>
</g>
<text x="908" y="715.5" textLength="21.7" lengthAdjust="spacingAndGlyphs" font-family="Liberation Sans" font-weight="bold" font-size="3.8" text-anchor="start" fill="#000" stroke="#000" stroke-width="0.3">MODIFIED</text>
<text x="933.8" y="707.5" textLength="13.4" lengthAdjust="spacingAndGlyphs" font-family="Liberation Sans" font-weight="bold" font-size="4" text-anchor="start" fill="#000" stroke="#000" stroke-width="0.3">NAME</text>
<text x="1016.5" y="708" textLength="13.4" lengthAdjust="spacingAndGlyphs" font-family="Liberation Sans" font-weight="bold" font-size="4.2" text-anchor="start" fill="#000" stroke="#000" stroke-width="0.3">DATE</text>
<text x="1009.3" y="714.5" textLength="31.3" lengthAdjust="spacingAndGlyphs" font-family="Liberation Sans" font-weight="bold" font-size="5" text-anchor="start" fill="#000" stroke="#000" stroke-width="0.15">09/04/2013</text>
<text x="1046" y="715.5" textLength="18.5" lengthAdjust="spacingAndGlyphs" font-family="Liberation Sans" font-weight="bold" font-size="3.8" text-anchor="start" fill="#000" stroke="#000" stroke-width="0.3">CHECKED</text>
<text x="1071.2" y="707.5" textLength="13.4" lengthAdjust="spacingAndGlyphs" font-family="Liberation Sans" font-weight="bold" font-size="4" text-anchor="start" fill="#000" stroke="#000" stroke-width="0.3">NAME</text>
<text x="1158.4" y="708" textLength="12.3" lengthAdjust="spacingAndGlyphs" font-family="Liberation Sans" font-weight="bold" font-size="4.2" text-anchor="start" fill="#000" stroke="#000" stroke-width="0.3">DATE</text>
<text x="1149" y="714.5" textLength="31.3" lengthAdjust="spacingAndGlyphs" font-family="Liberation Sans" font-weight="bold" font-size="5" text-anchor="start" fill="#000" stroke="#000" stroke-width="0.15">09/04/2013</text>
<text x="926" y="727.5" textLength="19.4" lengthAdjust="spacingAndGlyphs" font-family="Liberation Sans" font-weight="bold" font-size="4.3" text-anchor="start" fill="#000" stroke="#000" stroke-width="0.3">LIBELLE</text>
<text x="909.6" y="742.5" textLength="34.2" lengthAdjust="spacingAndGlyphs" font-family="Liberation Sans" font-weight="bold" font-size="4" text-anchor="start" fill="#000" stroke="#000" stroke-width="0.3">DENOMINATION</text>
<text x="950.5" y="742.3" textLength="108.5" lengthAdjust="spacingAndGlyphs" font-family="Liberation Sans" font-weight="normal" font-size="7" text-anchor="start" fill="#000" stroke="#000" stroke-width="0.05">ELEC BOARD MMI UP09 V00</text>
<text x="1114.8" y="728.8" textLength="28.6" lengthAdjust="spacingAndGlyphs" font-family="Liberation Sans" font-weight="bold" font-size="5.4" text-anchor="start" fill="#000" stroke="#000" stroke-width="0.35">NINGBO SR</text>
<text x="1114.8" y="735.5" textLength="67" lengthAdjust="spacingAndGlyphs" font-family="Liberation Sans" font-weight="bold" font-size="5.4" text-anchor="start" fill="#000" stroke="#000" stroke-width="0.35">COMMUNICATION CO. LTD</text>
<text x="1118.2" y="750.5" textLength="11.1" lengthAdjust="spacingAndGlyphs" font-family="Liberation Sans" font-weight="bold" font-size="3.8" text-anchor="start" fill="#000" stroke="#000" stroke-width="0.3">SHEET</text>
<text x="1150.6" y="751" textLength="22.4" lengthAdjust="spacingAndGlyphs" font-family="Liberation Sans" font-weight="normal" font-size="9" text-anchor="start" fill="#000" stroke="#000" stroke-width="0">1/2</text>
<text x="922.6" y="761" textLength="25.7" lengthAdjust="spacingAndGlyphs" font-family="Liberation Sans" font-weight="bold" font-size="4.2" text-anchor="start" fill="#000" stroke="#000" stroke-width="0.3">R.FXB/P.N.</text>
<text x="919.2" y="771.5" textLength="23.9" lengthAdjust="spacingAndGlyphs" font-family="Liberation Sans" font-weight="bold" font-size="5.6" text-anchor="start" fill="#000" stroke="#000" stroke-width="0.35">NINGBO SR</text>
<text x="1047.8" y="762.5" textLength="8.9" lengthAdjust="spacingAndGlyphs" font-family="Liberation Sans" font-weight="bold" font-size="3.8" text-anchor="start" fill="#000" stroke="#000" stroke-width="0.3">SIZE</text>
<text x="1048.9" y="775" textLength="9.6" lengthAdjust="spacingAndGlyphs" font-family="Liberation Sans" font-weight="normal" font-size="10" text-anchor="start" fill="#000" stroke="#000" stroke-width="0">A3</text>
<text x="1075.7" y="772" textLength="34.6" lengthAdjust="spacingAndGlyphs" font-family="Liberation Sans" font-weight="bold" font-size="3.8" text-anchor="start" fill="#000" stroke="#000" stroke-width="0.3">DRAWING NUMBER</text>
<text x="1131.1" y="772" textLength="9.4" lengthAdjust="spacingAndGlyphs" font-family="Liberation Sans" font-weight="bold" font-size="3.8" text-anchor="start" fill="#000" stroke="#000" stroke-width="0.3">TYPE</text>
<text x="1150.6" y="772" textLength="8.9" lengthAdjust="spacingAndGlyphs" font-family="Liberation Sans" font-weight="bold" font-size="3.8" text-anchor="start" fill="#000" stroke="#000" stroke-width="0.3">PART</text>
<text x="1170.7" y="772" textLength="10" lengthAdjust="spacingAndGlyphs" font-family="Liberation Sans" font-weight="bold" font-size="3.8" text-anchor="start" fill="#000" stroke="#000" stroke-width="0.3">VERS.</text>
<text x="1022" y="782" textLength="155.4" lengthAdjust="spacingAndGlyphs" font-family="Liberation Sans" font-weight="bold" font-size="3.6" text-anchor="start" fill="#000" stroke="#000" stroke-width="0.3">DOCUMENT SUN ALL RIGHTS RESERVED. REPRODUCTION AND DISCLOSURE PROHIBITED</text>
<text x="1138.3" y="691" textLength="13.4" lengthAdjust="spacingAndGlyphs" font-family="Liberation Sans" font-weight="bold" font-size="3.8" text-anchor="start" fill="#000" stroke="#000" stroke-width="0.3">SCALE</text>
<text x="1165" y="692.5" textLength="5.7" lengthAdjust="spacingAndGlyphs" font-family="Liberation Sans" font-weight="normal" font-size="9" text-anchor="start" fill="#000" stroke="#000" stroke-width="0">2</text>
<path d="M1148 698.5L1160 695.5V701.5Z" fill="none" stroke="#000" stroke-width="1.2"/><circle cx="1167" cy="698.5" r="3.5" fill="#000"/><path d="M1158 698.5H1175M1167 694V703" stroke="#000" stroke-width="0.8"/>
<text x="882.4" y="760" textLength="3.5" lengthAdjust="spacingAndGlyphs" font-family="Liberation Sans" font-weight="bold" font-size="4.5" text-anchor="start" fill="#000" stroke="#000" stroke-width="0.3">D</text>
<text x="882.4" y="767" textLength="3.5" lengthAdjust="spacingAndGlyphs" font-family="Liberation Sans" font-weight="bold" font-size="4.5" text-anchor="start" fill="#000" stroke="#000" stroke-width="0.3">A</text>
<text x="879.7" y="774.2" textLength="9.3" lengthAdjust="spacingAndGlyphs" font-family="Liberation Sans" font-weight="bold" font-size="3.8" text-anchor="start" fill="#000" stroke="#000" stroke-width="0.3">VER</text>
<text x="892.4" y="774.2" textLength="12.3" lengthAdjust="spacingAndGlyphs" font-family="Liberation Sans" font-weight="bold" font-size="3.8" text-anchor="start" fill="#000" stroke="#000" stroke-width="0.3">DATE</text>
<text x="891.5" y="760" textLength="15" lengthAdjust="spacingAndGlyphs" font-family="Liberation Sans" font-weight="bold" font-size="3.6" text-anchor="start" fill="#000" stroke="#000" stroke-width="0.3">0/05/000</text>
<text x="891.5" y="767" textLength="15" lengthAdjust="spacingAndGlyphs" font-family="Liberation Sans" font-weight="bold" font-size="3.6" text-anchor="start" fill="#000" stroke="#000" stroke-width="0.3">2/05/000</text>
<text transform="translate(875,777) rotate(-90)" textLength="52" lengthAdjust="spacingAndGlyphs" font-family="Liberation Sans" font-weight="bold" font-size="4.2" fill="#000" stroke="#000" stroke-width="0.2">DRAWING ASH</text>
</svg>
</body></html>
